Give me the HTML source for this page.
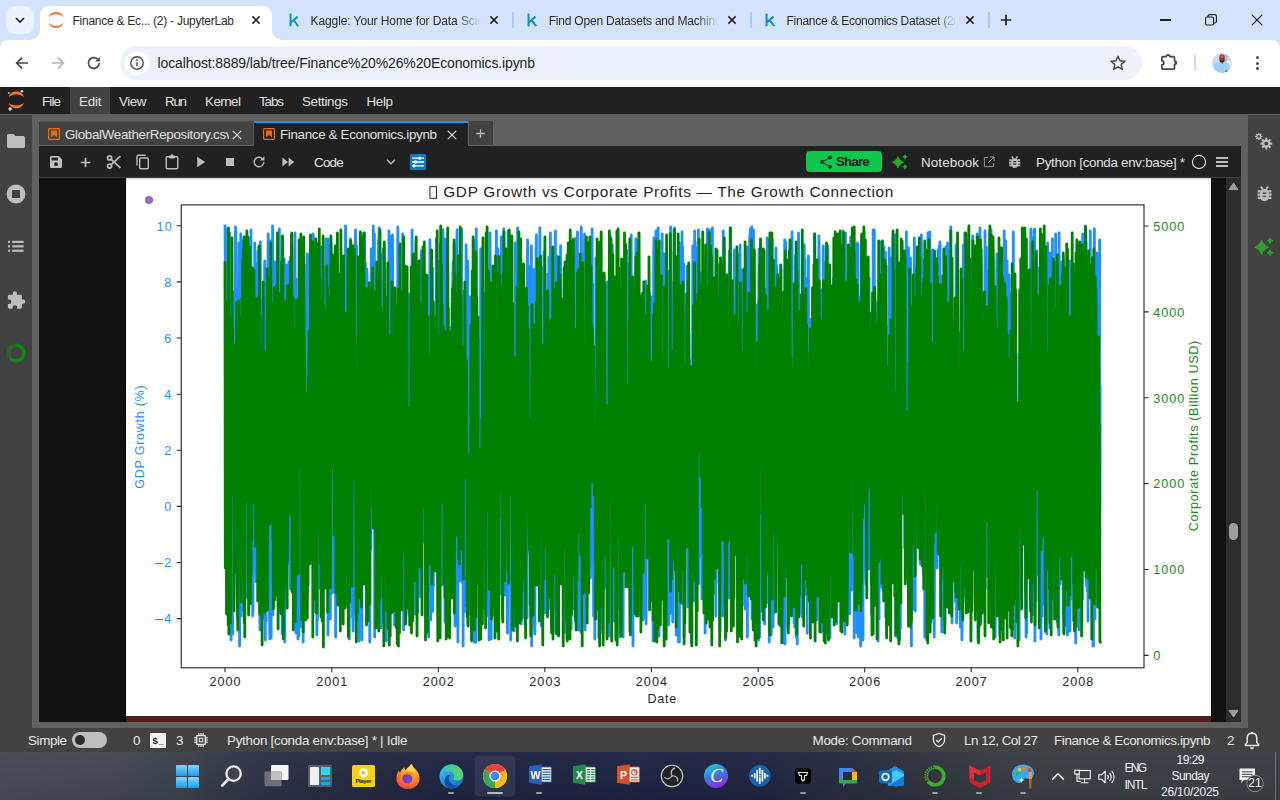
<!DOCTYPE html>
<html><head><meta charset="utf-8"><title>JupyterLab</title><style>
html,body{margin:0;padding:0;}
body{width:1280px;height:800px;overflow:hidden;position:relative;background:#616161;font-family:"Liberation Sans",sans-serif;}
.a{position:absolute;display:block;}
.t{position:absolute;white-space:pre;display:block;font-family:"Liberation Sans",sans-serif;}
</style></head><body>
<!-- chrome -->
<div class="a" style="left:0;top:0;width:1280px;height:40px;background:#d3e3fd"></div><div class="a" style="left:0;top:40px;width:1280px;height:47px;background:#fff"></div><div class="a" style="left:0;top:40px;width:8px;height:8px;background:#d3e3fd"></div><div class="a" style="left:0;top:40px;width:16px;height:16px;background:#fff;border-radius:8px 0 0 0"></div><div class="a" style="left:1272px;top:40px;width:8px;height:8px;background:#d3e3fd"></div><div class="a" style="left:1264px;top:40px;width:16px;height:16px;background:#fff;border-radius:0 8px 0 0"></div><div class="a" style="left:6px;top:6px;width:28px;height:28px;border-radius:9px;background:#ebf1fd"></div><svg class="a" style="left:14px;top:14px" width="12" height="12" viewBox="0 0 12 12"><path d="M2 4L6 8l4-4" fill="none" stroke="#1f1f1f" stroke-width="1.600"/></svg><div class="a" style="left:40px;top:6px;width:232px;height:36px;background:#fff;border-radius:9px 9px 0 0"></div><svg class="a" style="left:30px;top:30px" width="10" height="10" viewBox="0 0 10 10"><path d="M10 0v10H0A10 10 0 0 0 10 0z" fill="#fff"/></svg><svg class="a" style="left:272px;top:30px" width="10" height="10" viewBox="0 0 10 10"><path d="M0 0v10h10A10 10 0 0 1 0 0z" fill="#fff"/></svg><svg class="a" style="left:47px;top:11px" width="18" height="18" viewBox="0 0 18 18"><path d="M1.7 6.3A8 8 0 0 1 16.7 6.3A10.6 10.6 0 0 0 1.7 6.3z" fill="#f37726"/><path d="M1.7 11.7A8 8 0 0 0 16.7 11.7A10.6 10.6 0 0 1 1.7 11.7z" fill="#f37726"/></svg><span class="t" style="left:72.5px;top:12.8px;height:17px;line-height:17px;font-size:12px;color:#2b2b2b;font-weight:400;letter-spacing:-0.255px;">Finance &amp; Ec... (2) - JupyterLab</span><svg class="a" style="left:250.7px;top:15px" width="10" height="10" viewBox="0 0 10 10"><path d="M1.4 1.4l7.2 7.2M8.6 1.4l-7.2 7.2" stroke="#1f1f1f" stroke-width="1.5" fill="none"/></svg><svg class="a" style="left:288.5px;top:12px" width="12" height="16" viewBox="0 0 12 16"><path d="M1.6 1.6v12.6M2 10.2l6.6-5.6M4.6 8.2l4.6 6" fill="none" stroke="#1691c7" stroke-width="2.1" stroke-linecap="butt"/></svg><span class="t" style="left:310.5px;top:12.8px;height:17px;line-height:17px;font-size:12px;color:#2b2b2b;font-weight:400;letter-spacing:-0.087px;width:171px;overflow:hidden;-webkit-mask-image:linear-gradient(90deg,#000 86%,transparent 99%);mask-image:linear-gradient(90deg,#000 86%,transparent 99%);">Kaggle: Your Home for Data Scie</span><svg class="a" style="left:488.75px;top:15px" width="10" height="10" viewBox="0 0 10 10"><path d="M1.4 1.400l7.200 7.200M8.600 1.400l-7.200 7.200" stroke="#1f1f1f" stroke-width="1.500" fill="none"/></svg><div class="a" style="left:512px;top:12px;width:2px;height:16px;background:#a8c7fa;border-radius:1px"></div><svg class="a" style="left:526.5px;top:12px" width="12" height="16" viewBox="0 0 12 16"><path d="M1.6 1.6v12.6M2 10.2l6.6-5.6M4.6 8.2l4.6 6" fill="none" stroke="#1691c7" stroke-width="2.1" stroke-linecap="butt"/></svg><span class="t" style="left:548.7px;top:12.8px;height:17px;line-height:17px;font-size:12px;color:#2b2b2b;font-weight:400;letter-spacing:-0.203px;width:171px;overflow:hidden;-webkit-mask-image:linear-gradient(90deg,#000 86%,transparent 99%);mask-image:linear-gradient(90deg,#000 86%,transparent 99%);">Find Open Datasets and Machine</span><svg class="a" style="left:726.75px;top:15px" width="10" height="10" viewBox="0 0 10 10"><path d="M1.4 1.400l7.200 7.200M8.600 1.400l-7.200 7.200" stroke="#1f1f1f" stroke-width="1.500" fill="none"/></svg><div class="a" style="left:750px;top:12px;width:2px;height:16px;background:#a8c7fa;border-radius:1px"></div><svg class="a" style="left:764.5px;top:12px" width="12" height="16" viewBox="0 0 12 16"><path d="M1.6 1.6v12.6M2 10.2l6.6-5.6M4.6 8.2l4.6 6" fill="none" stroke="#1691c7" stroke-width="2.1" stroke-linecap="butt"/></svg><span class="t" style="left:786.5px;top:12.8px;height:17px;line-height:17px;font-size:12px;color:#2b2b2b;font-weight:400;letter-spacing:-0.264px;width:171px;overflow:hidden;-webkit-mask-image:linear-gradient(90deg,#000 86%,transparent 99%);mask-image:linear-gradient(90deg,#000 86%,transparent 99%);">Finance &amp; Economics Dataset (20</span><svg class="a" style="left:964.75px;top:15px" width="10" height="10" viewBox="0 0 10 10"><path d="M1.4 1.400l7.200 7.200M8.600 1.400l-7.200 7.200" stroke="#1f1f1f" stroke-width="1.500" fill="none"/></svg><div class="a" style="left:988px;top:12px;width:2px;height:16px;background:#a8c7fa;border-radius:1px"></div><svg class="a" style="left:999.5px;top:14px" width="12" height="12" viewBox="0 0 12 12"><path d="M6 0.8v10.4M0.8 6h10.4" stroke="#1f1f1f" stroke-width="1.7" fill="none"/></svg><div class="a" style="left:1160px;top:19.3px;width:10.500px;height:1.500px;background:#1f1f1f"></div><svg class="a" style="left:1205px;top:14px" width="12" height="12" viewBox="0 0 12 12"><rect x="0.6" y="3" width="8" height="8" rx="1.6" fill="none" stroke="#1f1f1f" stroke-width="1.1"/><path d="M3 3V2.2a1.6 1.6 0 0 1 1.6-1.6H9.8a1.6 1.6 0 0 1 1.6 1.6V7.4A1.6 1.6 0 0 1 9.8 9H8.8" fill="none" stroke="#1f1f1f" stroke-width="1.1"/></svg><svg class="a" style="left:1251px;top:14px" width="12" height="12" viewBox="0 0 12 12"><path d="M0.7 0.7l10.6 10.6M11.3 0.7L0.7 11.3" stroke="#1f1f1f" stroke-width="1.2" fill="none"/></svg><svg class="a" style="left:14px;top:55px" width="16" height="16" viewBox="0 0 16 16"><path d="M14 8H3M8 2.6L2.6 8 8 13.4" fill="none" stroke="#444746" stroke-width="1.7"/></svg><svg class="a" style="left:50px;top:55px" width="16" height="16" viewBox="0 0 16 16"><path d="M2 8h11M8 2.6L13.4 8 8 13.4" fill="none" stroke="#b4b6b9" stroke-width="1.7"/></svg><svg class="a" style="left:86px;top:55px" width="16" height="16" viewBox="0 0 16 16"><path d="M13.2 8A5.4 5.4 0 1 1 11.6 4.1" fill="none" stroke="#444746" stroke-width="1.7"/><path d="M13.8 2v4.6H9.2z" fill="#444746"/></svg><div class="a" style="left:120px;top:46px;width:1022px;height:34px;border-radius:17px;background:#edf2fa"></div><div class="a" style="left:125px;top:51px;width:24px;height:24px;border-radius:12px;background:#fff"></div><svg class="a" style="left:129px;top:55px" width="16" height="16" viewBox="0 0 16 16"><circle cx="8" cy="8" r="6.2" fill="none" stroke="#444746" stroke-width="1.4"/><path d="M8 7.2v3.8" stroke="#444746" stroke-width="1.5"/><circle cx="8" cy="5.1" r="0.9" fill="#444746"/></svg><span class="t" style="left:157.5px;top:53.0px;height:20px;line-height:20px;font-size:14px;color:#1f1f1f;font-weight:400;letter-spacing:-0.129px;">localhost:8889/lab/tree/Finance%20%26%20Economics.ipynb</span><svg class="a" style="left:1109px;top:54px" width="18" height="18" viewBox="0 0 18 18"><path d="M9 2.2l2.05 4.5 4.9.55-3.65 3.3 1 4.85L9 12.95 4.7 15.4l1-4.85L2.05 7.25l4.9-.55z" fill="none" stroke="#444746" stroke-width="1.5" stroke-linejoin="round"/></svg><svg class="a" style="left:1159px;top:52px" width="20" height="20" viewBox="0 0 20 20"><path d="M4 4.600H7.300a1.700 1.700 0 0 1 3.400 0H14.300a1.200 1.200 0 0 1 1.200 1.200V9a1.800 1.800 0 0 1 0 3.600V16a1.200 1.200 0 0 1-1.200 1.200H4a1.200 1.200 0 0 1-1.200-1.200V12.800a2 2 0 0 0 0-4V5.800A1.200 1.200 0 0 1 4 4.600z" fill="none" stroke="#444746" stroke-width="1.700" stroke-linejoin="round"/><path d="M15.500 9a1.800 1.800 0 0 1 0 3.600z" fill="#444746"/></svg><div class="a" style="left:1194px;top:55px;width:2px;height:16px;background:#c7d9f7;border-radius:1px"></div><svg class="a" style="left:1212px;top:52.900px" width="20" height="20" viewBox="0 0 20 20"><defs><clipPath id="av"><circle cx="10" cy="10" r="10"/></clipPath></defs><g clip-path="url(#av)"><rect width="20" height="20" fill="#d6d4f0"/><rect x="12.400" y="1.500" width="2.800" height="9" fill="#a9b9be"/><rect x="14.200" y="8" width="4.500" height="5.500" fill="#eef0f6"/><path d="M1.800 20V13.200c0-2 1.600-3.600 4-4L8.600 8.700l1.600 1.700 1.700-1.700 2.700.5c2 .4 3.200 1.800 3.200 3.800V20z" fill="#9ad2f6"/><ellipse cx="10" cy="4.900" rx="2.800" ry="3.700" fill="#8e3f22"/><ellipse cx="10" cy="3.600" rx="1.400" ry="1.500" fill="#c06a4a"/><path d="M7.300 6.200c.4 1 .8 1.600 2.700 1.600s2.300-.6 2.700-1.600c0 2.300-1 3.500-2.700 3.500S7.300 8.500 7.300 6.200z" fill="#1c223c"/><path d="M8.800 9.600l1.400 1.400 1.400-1.400z" fill="#a0522d"/><rect x="13.200" y="17.400" width="3" height="1.600" fill="#b5472c"/></g></svg><div class="a" style="left:1256.2px;top:56.3px;width:3px;height:3px;border-radius:2px;background:#444746"></div><div class="a" style="left:1256.2px;top:61.6px;width:3px;height:3px;border-radius:2px;background:#444746"></div><div class="a" style="left:1256.2px;top:66.9px;width:3px;height:3px;border-radius:2px;background:#444746"></div>
<!-- jlab -->
<div class="a" style="left:0;top:87px;width:1280px;height:27px;background:#212121"></div><div class="a" style="left:70px;top:87px;width:40px;height:27px;background:#424242"></div><svg class="a" style="left:6px;top:89px" width="20" height="23" viewBox="0 0 20 23"><path d="M2.600 7.900A8.250 8.250 0 0 1 18 7.900A14 14 0 0 0 2.600 7.900z" fill="#f37726"/><path d="M2.600 13.900A8.250 8.250 0 0 0 18 13.900A14 14 0 0 1 2.600 13.900z" fill="#f37726"/><circle cx="2.800" cy="3.900" r="1" fill="#b8b8b8"/><circle cx="15.900" cy="2.200" r="1.300" fill="#d6d6d6"/><circle cx="4.100" cy="20" r="1.700" fill="#dcdcdc"/></svg><span class="t" style="left:42.0px;top:91.5px;height:19px;line-height:19px;font-size:13.4px;color:#e0e0e0;font-weight:400;letter-spacing:-0.859px;">File</span><span class="t" style="left:79.0px;top:91.5px;height:19px;line-height:19px;font-size:13.4px;color:#e0e0e0;font-weight:400;letter-spacing:-0.193px;">Edit</span><span class="t" style="left:119.0px;top:91.5px;height:19px;line-height:19px;font-size:13.4px;color:#e0e0e0;font-weight:400;letter-spacing:-0.432px;">View</span><span class="t" style="left:165.0px;top:91.5px;height:19px;line-height:19px;font-size:13.4px;color:#e0e0e0;font-weight:400;letter-spacing:-1.289px;">Run</span><span class="t" style="left:205.0px;top:91.5px;height:19px;line-height:19px;font-size:13.4px;color:#e0e0e0;font-weight:400;letter-spacing:-0.544px;">Kernel</span><span class="t" style="left:259.0px;top:91.5px;height:19px;line-height:19px;font-size:13.4px;color:#e0e0e0;font-weight:400;letter-spacing:-1.099px;">Tabs</span><span class="t" style="left:302.0px;top:91.5px;height:19px;line-height:19px;font-size:13.4px;color:#e0e0e0;font-weight:400;letter-spacing:-0.342px;">Settings</span><span class="t" style="left:366.5px;top:91.5px;height:19px;line-height:19px;font-size:13.4px;color:#e0e0e0;font-weight:400;letter-spacing:-0.349px;">Help</span><div class="a" style="left:0;top:115px;width:32px;height:613px;background:#424242"></div><div class="a" style="left:1248px;top:115px;width:32px;height:613px;background:#424242"></div><svg class="a" style="left:6px;top:132px" width="20" height="18" viewBox="0 0 20 18"><path d="M2.6 2h5l2 2h7.8a1.6 1.6 0 0 1 1.6 1.6v8.8a1.6 1.6 0 0 1-1.6 1.6H2.6A1.6 1.6 0 0 1 1 14.400V3.600A1.600 1.600 0 0 1 2.600 2z" fill="#bdbdbd"/></svg><svg class="a" style="left:6px;top:183.500px" width="20" height="20" viewBox="0 0 20 20"><circle cx="10" cy="10" r="9.4" fill="#bdbdbd"/><rect x="6" y="6" width="8" height="8" rx="0.6" fill="#424242"/></svg><svg class="a" style="left:8px;top:240.300px" width="16" height="13" viewBox="0 0 18 14"><g fill="#bdbdbd"><rect x="0" y="0.600" width="2.400" height="2.400"/><rect x="4.600" y="0.600" width="13" height="2.400"/><rect x="0" y="5.600" width="2.400" height="2.400"/><rect x="4.600" y="5.600" width="13" height="2.400"/><rect x="0" y="10.600" width="2.400" height="2.400"/><rect x="4.600" y="10.600" width="13" height="2.400"/></g></svg><svg class="a" style="left:6px;top:290px" width="20" height="20" viewBox="0 0 20 20"><path d="M17.200 9.600h-1.300V6.300c0-.9-.7-1.600-1.600-1.600H11V3.400a2.100 2.100 0 1 0-4.200 0v1.300H3.500c-.9 0-1.600.7-1.600 1.600v3.100h1.200a2.300 2.300 0 1 1 0 4.600H1.900v3.100c0 .9.700 1.600 1.600 1.600h3.100v-1.200a2.300 2.300 0 1 1 4.600 0v1.200h3.100c.9 0 1.600-.7 1.600-1.600v-3.300h1.300a2.100 2.100 0 1 0 0-4.200z" fill="#bdbdbd"/></svg><svg class="a" style="left:4px;top:340.800px" width="24" height="24" viewBox="0 0 24 24"><path d="M11.45 4.12A7.9 7.9 0 1 1 5.69 16.75" fill="none" stroke="#0b8a0b" stroke-width="3.3"/><circle cx="5.84" cy="15.28" r="0.8" fill="#0b8a0b"/><circle cx="3.76" cy="15.33" r="0.8" fill="#0b8a0b"/><circle cx="5.20" cy="13.57" r="0.8" fill="#0b8a0b"/><circle cx="3.18" cy="13.08" r="0.8" fill="#0b8a0b"/><circle cx="5.03" cy="11.76" r="0.8" fill="#0b8a0b"/><circle cx="3.20" cy="10.76" r="0.8" fill="#0b8a0b"/><circle cx="5.33" cy="9.96" r="0.8" fill="#0b8a0b"/><circle cx="3.82" cy="8.53" r="0.8" fill="#0b8a0b"/><circle cx="6.08" cy="8.30" r="0.8" fill="#0b8a0b"/><circle cx="4.99" cy="6.53" r="0.8" fill="#0b8a0b"/><circle cx="7.24" cy="6.90" r="0.8" fill="#0b8a0b"/><circle cx="6.65" cy="4.90" r="0.8" fill="#0b8a0b"/><circle cx="8.72" cy="5.84" r="0.8" fill="#0b8a0b"/><circle cx="8.67" cy="3.76" r="0.8" fill="#0b8a0b"/><circle cx="10.43" cy="5.20" r="0.8" fill="#0b8a0b"/><circle cx="10.92" cy="3.18" r="0.8" fill="#0b8a0b"/></svg><svg class="a" style="left:1252px;top:130px" width="24" height="24" viewBox="1252 130 24 24"><path d="M1262.44 135.86L1262.44 137.14L1261.33 137.11L1261.02 137.86L1261.83 138.63L1260.93 139.53L1260.16 138.72L1259.41 139.03L1259.44 140.14L1258.16 140.14L1258.19 139.03L1257.44 138.72L1256.67 139.53L1255.77 138.63L1256.58 137.86L1256.27 137.11L1255.16 137.14L1255.16 135.86L1256.27 135.89L1256.58 135.14L1255.77 134.37L1256.67 133.47L1257.44 134.28L1258.19 133.97L1258.16 132.86L1259.44 132.86L1259.41 133.97L1260.16 134.28L1260.93 133.47L1261.83 134.37L1261.02 135.14L1261.33 135.89z" fill="#bdbdbd"/><circle cx="1258.8" cy="136.5" r="1.25" fill="#424242"/><path d="M1272.21 142.57L1272.21 144.63L1270.48 144.60L1269.97 145.85L1271.21 147.05L1269.75 148.51L1268.55 147.27L1267.30 147.78L1267.33 149.51L1265.27 149.51L1265.30 147.78L1264.05 147.27L1262.85 148.51L1261.39 147.05L1262.63 145.85L1262.12 144.60L1260.39 144.63L1260.39 142.57L1262.12 142.60L1262.63 141.35L1261.39 140.15L1262.85 138.69L1264.05 139.93L1265.30 139.42L1265.27 137.69L1267.33 137.69L1267.30 139.42L1268.55 139.93L1269.75 138.69L1271.21 140.15L1269.97 141.35L1270.48 142.60z" fill="#bdbdbd"/><circle cx="1266.3" cy="143.6" r="1.9" fill="#424242"/></svg><svg class="a" style="left:1255.50px;top:185.35px" width="17.00" height="18.00" viewBox="-1 -1 14 15"><g fill="#bdbdbd"><path d="M2.300 6.400C2.300 3.800 3.900 2.300 6 2.300S9.700 3.800 9.700 6.400V8.600C9.700 11 8.100 12.500 6 12.500S2.300 11 2.300 8.600z"/></g><g stroke="#bdbdbd" stroke-width="1.900" fill="none"><path d="M0.300 4.300H3M9 4.300h2.700M0.100 7.100H3M9 7.100h2.900M0.300 9.800H3M9 9.800h2.700"/><path d="M3.100 0.300l1.400 2.400M8.900 0.300L7.500 2.700" stroke-width="1.600"/></g><g stroke="#424242" stroke-width="1.100" opacity="0.9"><path d="M4.500 5.900h3M4.500 8.500h3"/></g></svg><svg class="a" style="left:1251.70px;top:235.30px" width="24" height="24" viewBox="1251.70 235.30 24 24"><path d="M1261.30 239.75Q1263.41 245.44 1269.10 247.55Q1263.41 249.66 1261.30 255.35Q1259.19 249.66 1253.50 247.55Q1259.19 245.44 1261.30 239.75zM1269.70 237.58Q1270.57 240.19 1273.18 241.06Q1270.57 241.93 1269.70 244.54Q1268.83 241.93 1266.22 241.06Q1268.83 240.19 1269.70 237.58zM1269.70 249.58Q1270.57 252.19 1273.18 253.06Q1270.57 253.93 1269.70 256.54Q1268.83 253.93 1266.22 253.06Q1268.83 252.19 1269.70 249.58z" fill="#2aa32a"/></svg><div class="a" style="left:39px;top:121px;width:215px;height:24px;background:#424242"></div><div class="a" style="left:254px;top:121px;width:214px;height:25px;background:#212121"></div><div class="a" style="left:254px;top:121px;width:214px;height:2px;background:#2196f3"></div><div class="a" style="left:469px;top:121px;width:24px;height:24px;background:#424242"></div><div class="a" style="left:253px;top:121px;width:1px;height:24px;background:#575757"></div><div class="a" style="left:39px;top:121px;width:215px;height:1px;background:#4d4d4d"></div><svg class="a" style="left:48px;top:128.1px" width="12" height="12" viewBox="0 0 12 12"><rect x="0.6" y="0.6" width="10.8" height="10.8" rx="0.8" fill="none" stroke="#ef6c00" stroke-width="1.2"/><path d="M3 2.6h6v6.6L6 6.9 3 9.2z" fill="#ef6c00"/></svg><span class="t" style="left:65.0px;top:125.0px;height:19px;line-height:19px;font-size:13.4px;color:#e0e0e0;font-weight:400;letter-spacing:-0.323px;width:164px;overflow:hidden;">GlobalWeatherRepository.csv</span><svg class="a" style="left:232px;top:129.5px" width="10" height="10" viewBox="0 0 10 10"><path d="M0.8 0.8l8.4 8.4M9.2 0.8L0.8 9.2" stroke="#e0e0e0" stroke-width="1.2" fill="none"/></svg><svg class="a" style="left:263px;top:128.1px" width="12" height="12" viewBox="0 0 12 12"><rect x="0.6" y="0.6" width="10.8" height="10.8" rx="0.8" fill="none" stroke="#ef6c00" stroke-width="1.2"/><path d="M3 2.6h6v6.6L6 6.9 3 9.2z" fill="#ef6c00"/></svg><span class="t" style="left:280.0px;top:125.0px;height:19px;line-height:19px;font-size:13.4px;color:#e0e0e0;font-weight:400;letter-spacing:-0.343px;">Finance &amp; Economics.ipynb</span><svg class="a" style="left:447px;top:129.5px" width="10" height="10" viewBox="0 0 10 10"><path d="M0.8 0.8l8.4 8.4M9.2 0.8L0.8 9.2" stroke="#e0e0e0" stroke-width="1.2" fill="none"/></svg><svg class="a" style="left:475.250px;top:128px" width="11" height="11" viewBox="0 0 11 11"><path d="M5.500 1.200v8.600M1.200 5.500h8.600" stroke="#bdbdbd" stroke-width="1.300" fill="none"/></svg><div class="a" style="left:39px;top:146px;width:1202px;height:32px;background:#212121"></div><svg class="a" style="left:49px;top:155px" width="14" height="14" viewBox="0 0 14 14"><path d="M1 2.200A1.200 1.200 0 0 1 2.200 1h7.600L13 4.200v7.600A1.200 1.200 0 0 1 11.800 13H2.200A1.200 1.200 0 0 1 1 11.800z" fill="#bdbdbd"/><rect x="2.600" y="2.600" width="6.400" height="2.800" fill="#212121"/><circle cx="7" cy="9.200" r="1.900" fill="#212121"/></svg><svg class="a" style="left:79.500px;top:156.500px" width="11" height="11" viewBox="0 0 11 11"><path d="M5.500 0.700v9.600M0.700 5.500h9.600" stroke="#bdbdbd" stroke-width="1.700" fill="none"/></svg><svg class="a" style="left:106px;top:154px" width="16" height="16" viewBox="0 0 16 16"><g fill="none" stroke="#bdbdbd" stroke-width="1.700"><circle cx="3.600" cy="3.900" r="2"/><circle cx="3.600" cy="12.100" r="2"/><path d="M5.200 5.300L14.400 13.800M5.200 10.700L14.400 2.200"/></g></svg><svg class="a" style="left:135px;top:154px" width="15" height="16" viewBox="0 0 15 16"><g fill="none" stroke="#bdbdbd" stroke-width="1.400"><rect x="4.700" y="4" width="8.600" height="10.800" rx="1.200"/><path d="M2 11.400V2.400A1.200 1.200 0 0 1 3.200 1.200h7.400"/></g></svg><svg class="a" style="left:165px;top:154px" width="14" height="16" viewBox="0 0 14 16"><g fill="none" stroke="#bdbdbd" stroke-width="1.400"><rect x="1.200" y="2.800" width="11.600" height="12" rx="1.200"/></g><rect x="4" y="1.400" width="6" height="3" rx="0.800" fill="#bdbdbd"/><circle cx="7" cy="1.500" r="1.300" fill="#bdbdbd"/></svg><svg class="a" style="left:196px;top:156px" width="10" height="12" viewBox="0 0 10 12"><path d="M1.200 0.800L9.200 6 1.200 11.200z" fill="#bdbdbd"/></svg><div class="a" style="left:226px;top:158px;width:8px;height:8px;background:#bdbdbd"></div><svg class="a" style="left:251.500px;top:155px" width="14" height="14" viewBox="0 0 14 14"><path d="M11.800 7A4.800 4.800 0 1 1 10.300 3.500" fill="none" stroke="#bdbdbd" stroke-width="1.400"/><path d="M12.400 1.200v4.400H8z" fill="#bdbdbd"/></svg><svg class="a" style="left:282px;top:157px" width="13" height="10" viewBox="0 0 13 10"><path d="M0.400 0.600L6 5 0.400 9.400zM6.600 0.600L12.200 5 6.600 9.400z" fill="#bdbdbd"/></svg><span class="t" style="left:314.0px;top:152.5px;height:19px;line-height:19px;font-size:13.4px;color:#e0e0e0;font-weight:400;letter-spacing:-0.755px;">Code</span><svg class="a" style="left:386px;top:158px" width="10" height="8" viewBox="0 0 10 8"><path d="M1 1.800l4 4 4-4" fill="none" stroke="#bdbdbd" stroke-width="1.300"/></svg><div class="a" style="left:410px;top:154px;width:16px;height:16px;background:#0d7ac4;border-radius:1.500px"></div><svg class="a" style="left:410px;top:154px" width="16" height="16" viewBox="0 0 16 16"><g stroke="#fff" stroke-width="1.300" fill="none"><path d="M2 4.200h12M2 8h12M2 11.800h12"/></g><g fill="#fff"><rect x="8.600" y="2.700" width="2.200" height="3"/><rect x="4.400" y="6.500" width="2.200" height="3"/><rect x="3" y="10.300" width="2.200" height="3"/></g></svg><div class="a" style="left:806px;top:150.800px;width:76.200px;height:21.400px;background:#0cc84c;border-radius:4px"></div><svg class="a" style="left:819px;top:155px" width="14" height="14" viewBox="0 0 14 14"><g fill="#2e3a30"><circle cx="11" cy="2.500" r="2"/><circle cx="3" cy="7.100" r="2"/><circle cx="11" cy="11.700" r="2"/></g><path d="M11 2.500L3 7.100l8 4.600" stroke="#2e3a30" stroke-width="1.100" fill="none"/></svg><span class="t" style="left:836.0px;top:151.9px;height:19px;line-height:19px;font-size:13.4px;color:#1c1c1c;font-weight:700;letter-spacing:-0.855px;">Share</span><svg class="a" style="left:888.10px;top:150.00px" width="24" height="24" viewBox="888.10 150.00 24 24"><path d="M898.10 155.75Q899.86 160.50 904.60 162.25Q899.86 164.00 898.10 168.75Q896.35 164.00 891.60 162.25Q896.35 160.50 898.10 155.75zM905.10 153.90Q905.83 156.08 908.00 156.80Q905.83 157.53 905.10 159.70Q904.38 157.53 902.20 156.80Q904.38 156.08 905.10 153.90zM905.10 163.90Q905.83 166.08 908.00 166.80Q905.83 167.53 905.10 169.70Q904.38 167.53 902.20 166.80Q904.38 166.08 905.10 163.90z" fill="#2aa82a"/></svg><span class="t" style="left:921.0px;top:152.5px;height:19px;line-height:19px;font-size:13.4px;color:#e0e0e0;font-weight:400;letter-spacing:0.096px;">Notebook</span><svg class="a" style="left:983px;top:156px" width="12" height="12" viewBox="0 0 12 12"><path d="M5 1.600H1.400v9H10.400V7" fill="none" stroke="#9a9a9a" stroke-width="1"/><path d="M6.800 0.900h4.300v4.300M11 1L5.400 6.600" fill="none" stroke="#9a9a9a" stroke-width="1"/></svg><svg class="a" style="left:1008.30px;top:155.21px" width="13.40" height="14.40" viewBox="-1 -1 14 15"><g fill="#bdbdbd"><path d="M2.300 6.400C2.300 3.800 3.900 2.300 6 2.300S9.700 3.800 9.700 6.400V8.600C9.700 11 8.100 12.500 6 12.500S2.300 11 2.300 8.600z"/></g><g stroke="#bdbdbd" stroke-width="1.900" fill="none"><path d="M0.300 4.300H3M9 4.300h2.700M0.100 7.100H3M9 7.100h2.900M0.300 9.800H3M9 9.800h2.700"/><path d="M3.100 0.300l1.400 2.400M8.900 0.300L7.500 2.700" stroke-width="1.600"/></g><g stroke="#212121" stroke-width="1.100" opacity="0.9"><path d="M4.500 5.900h3M4.500 8.500h3"/></g></svg><span class="t" style="left:1036.0px;top:152.5px;height:19px;line-height:19px;font-size:13.4px;color:#e0e0e0;font-weight:400;letter-spacing:-0.306px;">Python [conda env:base] *</span><svg class="a" style="left:1190.500px;top:154px" width="16" height="16" viewBox="0 0 16 16"><circle cx="8" cy="8" r="6.600" fill="none" stroke="#e0e0e0" stroke-width="1.100"/></svg><div class="a" style="left:1216px;top:156.9px;width:12px;height:2.500px;background:#bdbdbd"></div><div class="a" style="left:1216px;top:160.8px;width:12px;height:2.500px;background:#bdbdbd"></div><div class="a" style="left:1216px;top:164.7px;width:12px;height:2.500px;background:#bdbdbd"></div><div class="a" style="left:39px;top:178px;width:1202px;height:544px;background:#111"></div><div class="a" style="left:126px;top:178px;width:1085px;height:538px;background:#fff"></div><div class="a" style="left:126px;top:716px;width:1085px;height:6px;background:#4f1f1c"></div><div class="a" style="left:39px;top:177px;width:1202px;height:1px;background:#3e3e3e"></div><div class="a" style="left:39px;top:178px;width:1187px;height:2px;background:linear-gradient(180deg,rgba(0,0,0,.22),rgba(0,0,0,0))"></div><div class="a" style="left:125px;top:178px;width:1px;height:544px;background:#000"></div><div class="a" style="left:1226px;top:178px;width:15px;height:544px;background:#2c2c2c"></div><svg class="a" style="left:1228px;top:182px" width="11" height="9" viewBox="0 0 11 9"><path d="M5.500 1L10 7.600H1z" fill="#9f9f9f" stroke="#9f9f9f" stroke-width="1" stroke-linejoin="round"/></svg><svg class="a" style="left:1228px;top:709px" width="11" height="9" viewBox="0 0 11 9"><path d="M5.500 8L10 1.400H1z" fill="#9f9f9f" stroke="#9f9f9f" stroke-width="1" stroke-linejoin="round"/></svg><div class="a" style="left:1229px;top:523px;width:9.200px;height:17.200px;border-radius:4.600px;background:#9f9f9f"></div>
<!-- chart -->
<svg class="a" style="left:126px;top:178px" width="1085" height="538" viewBox="126 178 1085 538"><g style="filter:blur(0.45px)"><polyline points="225.0,226 225.3,265 225.6,394 225.9,229 226.2,447 226.5,302 226.8,569 227.0,431 227.3,382 227.6,313 227.9,607 228.2,519 228.5,609 228.8,306 229.1,355 229.4,629 229.7,233 230.0,241 230.3,371 230.5,388 230.8,580 231.1,640 231.4,424 231.7,622 232.0,567 232.3,545 232.6,634 232.9,451 233.2,461 233.5,292 233.8,428 234.0,377 234.3,436 234.6,368 234.9,454 235.2,530 235.5,227 235.8,228 236.1,293 236.4,349 236.7,514 237.0,550 237.3,525 237.5,617 237.8,324 238.1,478 238.4,290 238.7,484 239.0,243 239.3,290 239.6,646 239.9,558 240.2,264 240.5,449 240.8,234 241.1,479 241.3,616 241.6,382 241.9,319 242.2,533 242.5,610 242.8,507 243.1,241 243.4,328 243.7,597 244.0,543 244.3,604 244.6,621 244.8,311 245.1,572 245.4,411 245.7,458 246.0,566 246.3,339 246.6,592 246.9,376 247.2,598 247.5,470 247.8,557 248.1,533 248.3,238 248.6,309 248.9,519 249.2,274 249.5,558 249.8,481 250.1,287 250.4,377 250.7,604 251.0,230 251.3,557 251.6,538 251.8,321 252.1,508 252.4,522 252.7,616 253.0,609 253.3,401 253.6,544 253.9,394 254.2,490 254.5,456 254.8,243 255.1,443 255.4,405 255.6,282 255.9,570 256.2,582 256.5,264 256.8,302 257.1,542 257.4,567 257.7,335 258.0,251 258.3,564 258.6,247 258.9,275 259.1,393 259.4,469 259.7,603 260.0,630 260.3,242 260.6,546 260.9,350 261.2,539 261.5,300 261.8,396 262.1,523 262.4,573 262.6,344 262.9,618 263.2,551 263.5,411 263.8,288 264.1,388 264.4,529 264.7,261 265.0,561 265.3,640 265.6,533 265.9,459 266.1,621 266.4,573 266.7,491 267.0,406 267.3,591 267.6,494 267.9,272 268.2,234 268.5,370 268.8,356 269.1,401 269.4,588 269.7,632 269.9,639 270.2,264 270.5,352 270.8,241 271.1,638 271.4,379 271.7,444 272.0,339 272.3,512 272.6,226 272.9,615 273.2,417 273.4,336 273.7,268 274.0,336 274.3,351 274.6,313 274.9,262 275.2,499 275.5,358 275.8,268 276.1,280 276.4,471 276.7,314 276.9,283 277.2,406 277.5,384 277.8,486 278.1,401 278.4,390 278.7,613 279.0,378 279.3,229 279.6,276 279.9,340 280.2,483 280.4,337 280.7,402 281.0,461 281.3,294 281.6,611 281.9,331 282.2,634 282.5,394 282.8,444 283.1,550 283.4,353 283.7,437 284.0,388 284.2,259 284.5,539 284.8,642 285.1,520 285.4,361 285.7,561 286.0,575 286.3,265 286.6,369 286.9,461 287.2,271 287.5,509 287.7,366 288.0,563 288.3,465 288.6,307 288.9,262 289.2,276 289.5,485 289.8,401 290.1,513 290.4,589 290.7,438 291.0,294 291.2,289 291.5,347 291.8,247 292.1,530 292.4,576 292.7,457 293.0,531 293.3,557 293.6,472 293.9,383 294.2,439 294.5,514 294.7,294 295.0,233 295.3,456 295.6,615 295.9,633 296.2,279 296.5,629 296.8,348 297.1,407 297.4,517 297.7,314 298.0,639 298.3,590 298.5,455 298.8,636 299.1,297 299.4,547 299.7,587 300.0,627 300.3,382 300.6,459 300.9,382 301.2,371 301.5,307 301.8,243 302.0,359 302.3,563 302.6,447 302.9,571 303.2,642 303.5,448 303.8,346 304.1,571 304.4,532 304.7,501 305.0,353 305.3,428 305.5,388 305.8,328 306.1,481 306.4,313 306.7,265 307.0,610 307.3,254 307.6,343 307.9,592 308.2,456 308.5,383 308.8,264 309.0,488 309.3,407 309.6,277 309.9,311 310.2,249 310.5,452 310.8,373 311.1,560 311.4,343 311.7,302 312.0,377 312.3,345 312.6,557 312.8,268 313.1,234 313.4,235 313.7,421 314.0,314 314.3,512 314.6,264 314.9,287 315.2,500 315.5,612 315.8,461 316.1,415 316.3,323 316.6,442 316.9,635 317.2,306 317.5,620 317.8,310 318.1,574 318.4,506 318.7,315 319.0,588 319.3,584 319.6,429 319.8,342 320.1,293 320.4,357 320.7,249 321.0,439 321.3,247 321.6,610 321.9,554 322.2,425 322.5,525 322.8,340 323.1,378 323.4,427 323.6,292 323.9,411 324.2,516 324.5,486 324.8,291 325.1,268 325.4,559 325.7,289 326.0,239 326.3,426 326.6,406 326.9,562 327.1,421 327.4,435 327.7,392 328.0,635 328.3,239 328.6,430 328.9,478 329.2,310 329.5,410 329.8,440 330.1,356 330.4,619 330.6,420 330.9,473 331.2,244 331.5,258 331.8,533 332.1,448 332.4,593 332.7,464 333.0,303 333.3,268 333.6,446 333.9,513 334.1,566 334.4,387 334.7,257 335.0,592 335.3,319 335.6,637 335.9,565 336.2,551 336.5,358 336.8,511 337.1,497 337.4,386 337.7,603 337.9,339 338.2,595 338.5,432 338.8,541 339.1,563 339.4,423 339.7,463 340.0,489 340.3,473 340.6,424 340.9,579 341.2,561 341.4,381 341.7,378 342.0,424 342.3,288 342.6,389 342.9,286 343.2,549 343.5,335 343.8,306 344.1,267 344.4,514 344.7,514 344.9,258 345.2,555 345.5,226 345.8,273 346.1,590 346.4,546 346.7,341 347.0,537 347.3,606 347.6,296 347.9,469 348.2,314 348.4,594 348.7,477 349.0,358 349.3,639 349.6,562 349.9,359 350.2,263 350.5,239 350.8,598 351.1,434 351.4,328 351.7,435 352.0,358 352.2,567 352.5,617 352.8,602 353.1,631 353.4,415 353.7,430 354.0,407 354.3,585 354.6,569 354.9,561 355.2,293 355.5,230 355.7,257 356.0,607 356.3,621 356.6,246 356.9,452 357.2,325 357.5,509 357.8,450 358.1,430 358.4,466 358.7,394 359.0,641 359.2,352 359.5,291 359.8,570 360.1,456 360.4,336 360.7,476 361.0,565 361.3,577 361.6,431 361.9,640 362.2,271 362.5,309 362.7,350 363.0,284 363.3,382 363.6,476 363.9,394 364.2,434 364.5,233 364.8,308 365.1,538 365.4,263 365.7,333 366.0,319 366.3,304 366.5,476 366.8,269 367.1,276 367.4,354 367.7,324 368.0,325 368.3,476 368.6,343 368.9,617 369.2,503 369.5,449 369.8,642 370.0,497 370.3,378 370.6,384 370.9,549 371.2,249 371.5,366 371.8,505 372.1,369 372.4,407 372.7,422 373.0,483 373.3,226 373.5,376 373.8,352 374.1,326 374.4,234 374.7,637 375.0,388 375.3,336 375.6,539 375.9,478 376.2,625 376.5,564 376.8,489 377.0,605 377.3,541 377.6,266 377.9,415 378.2,433 378.5,240 378.8,408 379.1,228 379.4,378 379.7,306 380.0,615 380.3,395 380.6,327 380.8,628 381.1,255 381.4,579 381.7,448 382.0,576 382.3,438 382.6,389 382.9,622 383.2,249 383.5,470 383.8,425 384.1,395 384.3,493 384.6,526 384.9,371 385.2,411 385.5,527 385.8,345 386.1,522 386.4,641 386.7,544 387.0,629 387.3,581 387.6,329 387.8,483 388.1,269 388.4,332 388.7,626 389.0,231 389.3,249 389.6,616 389.9,266 390.2,466 390.5,446 390.8,237 391.1,544 391.3,426 391.6,252 391.9,342 392.2,450 392.5,235 392.8,303 393.1,393 393.4,598 393.7,384 394.0,455 394.3,561 394.6,625 394.9,424 395.1,594 395.4,460 395.7,366 396.0,455 396.3,536 396.6,402 396.9,470 397.2,319 397.5,423 397.8,227 398.1,246 398.4,338 398.6,546 398.9,599 399.2,271 399.5,317 399.8,384 400.1,496 400.4,532 400.7,358 401.0,409 401.3,398 401.6,380 401.9,330 402.1,567 402.4,542 402.7,234 403.0,261 403.3,277 403.6,630 403.9,621 404.2,533 404.5,468 404.8,384 405.1,604 405.4,419 405.6,616 405.9,610 406.2,362 406.5,415 406.8,381 407.1,490 407.4,445 407.7,558 408.0,502 408.3,333 408.6,294 408.9,615 409.2,596 409.4,306 409.7,384 410.0,323 410.3,557 410.6,468 410.9,538 411.2,306 411.5,491 411.8,372 412.1,230 412.4,510 412.7,416 412.9,333 413.2,259 413.5,467 413.8,491 414.1,606 414.4,278 414.7,614 415.0,612 415.3,409 415.6,443 415.9,358 416.2,521 416.4,320 416.7,615 417.0,557 417.3,368 417.6,612 417.9,519 418.2,342 418.5,355 418.8,528 419.1,587 419.4,496 419.7,341 419.9,492 420.2,597 420.5,348 420.8,407 421.1,260 421.4,251 421.7,262 422.0,462 422.3,309 422.6,518 422.9,513 423.2,479 423.5,253 423.7,270 424.0,542 424.3,494 424.6,493 424.9,494 425.2,480 425.5,484 425.8,565 426.1,409 426.4,311 426.7,419 427.0,295 427.2,410 427.5,572 427.8,327 428.1,276 428.4,528 428.7,637 429.0,430 429.3,418 429.6,408 429.9,240 430.2,373 430.5,308 430.7,620 431.0,417 431.3,315 431.6,611 431.9,612 432.2,336 432.5,268 432.8,611 433.1,380 433.4,586 433.7,333 434.0,374 434.2,543 434.5,554 434.8,325 435.1,427 435.4,325 435.7,481 436.0,505 436.3,239 436.6,364 436.9,439 437.2,421 437.5,343 437.8,349 438.0,262 438.3,474 438.6,299 438.9,366 439.2,287 439.5,307 439.8,296 440.1,273 440.4,244 440.7,377 441.0,426 441.3,348 441.5,309 441.8,469 442.1,470 442.4,585 442.7,335 443.0,230 443.3,489 443.6,576 443.9,561 444.2,468 444.5,524 444.8,239 445.0,622 445.3,517 445.6,598 445.9,374 446.2,320 446.5,571 446.8,620 447.1,454 447.4,401 447.7,264 448.0,631 448.3,601 448.5,569 448.8,555 449.1,548 449.4,345 449.7,396 450.0,552 450.3,569 450.6,528 450.9,574 451.2,328 451.5,515 451.8,416 452.1,303 452.3,445 452.6,537 452.9,273 453.2,262 453.5,503 453.8,416 454.1,244 454.4,444 454.7,554 455.0,626 455.3,248 455.6,309 455.8,485 456.1,425 456.4,430 456.7,531 457.0,230 457.3,370 457.6,547 457.9,642 458.2,448 458.5,490 458.8,311 459.1,346 459.3,392 459.6,580 459.9,581 460.2,511 460.5,538 460.8,281 461.1,429 461.4,379 461.7,229 462.0,535 462.3,422 462.6,583 462.8,322 463.1,646 463.4,301 463.7,291 464.0,301 464.3,612 464.6,533 464.9,345 465.2,606 465.5,445 465.8,449 466.1,245 466.4,400 466.6,286 466.9,519 467.2,314 467.5,471 467.8,261 468.1,608 468.4,299 468.7,559 469.0,418 469.3,425 469.6,580 469.9,297 470.1,516 470.4,516 470.7,615 471.0,518 471.3,450 471.6,346 471.9,495 472.2,358 472.5,602 472.8,481 473.1,452 473.4,240 473.6,297 473.9,371 474.2,642 474.5,488 474.8,348 475.1,547 475.4,409 475.7,454 476.0,642 476.3,229 476.6,310 476.9,560 477.1,387 477.4,524 477.7,488 478.0,420 478.3,521 478.6,505 478.9,482 479.2,366 479.5,539 479.8,563 480.1,339 480.4,508 480.7,249 480.9,410 481.2,342 481.5,507 481.8,299 482.1,608 482.4,587 482.7,607 483.0,361 483.3,349 483.6,571 483.9,477 484.2,294 484.4,397 484.7,609 485.0,551 485.3,581 485.6,594 485.9,475 486.2,616 486.5,259 486.8,467 487.1,431 487.4,374 487.7,324 487.9,301 488.2,484 488.5,507 488.8,473 489.1,640 489.4,478 489.7,352 490.0,233 490.3,314 490.6,369 490.9,391 491.2,639 491.4,507 491.7,503 492.0,373 492.3,602 492.6,488 492.9,432 493.2,315 493.5,299 493.8,389 494.1,580 494.4,324 494.7,267 495.0,416 495.2,498 495.5,436 495.8,587 496.1,346 496.4,231 496.7,430 497.0,346 497.3,295 497.6,564 497.9,249 498.2,383 498.5,563 498.7,612 499.0,544 499.3,404 499.6,353 499.9,508 500.2,256 500.5,495 500.8,452 501.1,594 501.4,237 501.7,590 502.0,266 502.2,418 502.5,411 502.8,411 503.1,535 503.4,264 503.7,229 504.0,303 504.3,394 504.6,595 504.9,300 505.2,525 505.5,269 505.8,545 506.0,405 506.3,297 506.6,569 506.9,416 507.2,615 507.5,633 507.8,571 508.1,231 508.4,251 508.7,370 509.0,517 509.3,364 509.5,336 509.8,486 510.1,398 510.4,308 510.7,640 511.0,563 511.3,450 511.6,587 511.9,484 512.2,407 512.5,574 512.8,428 513.0,536 513.3,408 513.6,507 513.9,377 514.2,631 514.5,364 514.8,586 515.1,243 515.4,394 515.7,449 516.0,474 516.3,384 516.5,357 516.8,328 517.1,330 517.4,442 517.7,228 518.0,294 518.3,287 518.6,475 518.9,464 519.2,408 519.5,266 519.8,425 520.1,426 520.3,465 520.6,266 520.9,512 521.2,624 521.5,341 521.8,268 522.1,339 522.4,395 522.7,330 523.0,518 523.3,397 523.6,617 523.8,594 524.1,459 524.4,435 524.7,480 525.0,625 525.3,354 525.6,425 525.9,546 526.2,518 526.5,480 526.8,547 527.1,618 527.3,263 527.6,240 527.9,367 528.2,282 528.5,469 528.8,308 529.1,553 529.4,332 529.7,408 530.0,266 530.3,605 530.6,313 530.8,595 531.1,420 531.4,246 531.7,646 532.0,544 532.3,521 532.6,510 532.9,620 533.2,270 533.5,303 533.8,479 534.1,497 534.4,400 534.6,627 534.9,634 535.2,269 535.5,517 535.8,437 536.1,254 536.4,235 536.7,448 537.0,560 537.3,522 537.6,258 537.9,269 538.1,564 538.4,294 538.7,498 539.0,448 539.3,574 539.6,276 539.9,228 540.2,562 540.5,381 540.8,566 541.1,276 541.4,626 541.6,602 541.9,341 542.2,515 542.5,268 542.8,281 543.1,347 543.4,590 543.7,354 544.0,252 544.3,459 544.6,613 544.9,553 545.1,517 545.4,348 545.7,564 546.0,571 546.3,548 546.6,367 546.9,314 547.2,490 547.5,368 547.8,274 548.1,398 548.4,550 548.7,520 548.9,257 549.2,366 549.5,530 549.8,377 550.1,609 550.4,233 550.7,461 551.0,424 551.3,423 551.6,628 551.9,394 552.2,527 552.4,541 552.7,309 553.0,610 553.3,527 553.6,329 553.9,543 554.2,529 554.5,416 554.8,568 555.1,269 555.4,231 555.7,633 555.9,452 556.2,331 556.5,485 556.8,256 557.1,436 557.4,571 557.7,413 558.0,375 558.3,495 558.6,370 558.9,317 559.2,429 559.4,434 559.7,291 560.0,359 560.3,428 560.6,246 560.9,573 561.2,319 561.5,577 561.8,391 562.1,548 562.4,461 562.7,321 563.0,316 563.2,314 563.5,547 563.8,441 564.1,554 564.4,403 564.7,437 565.0,632 565.3,395 565.6,346 565.9,406 566.2,279 566.5,571 566.7,583 567.0,639 567.3,438 567.6,464 567.9,461 568.2,536 568.5,311 568.8,616 569.1,265 569.4,407 569.7,418 570.0,314 570.2,547 570.5,585 570.8,516 571.1,629 571.4,514 571.7,385 572.0,426 572.3,535 572.6,399 572.9,609 573.2,301 573.5,574 573.7,539 574.0,579 574.3,356 574.6,297 574.9,316 575.2,621 575.5,474 575.8,493 576.1,556 576.4,238 576.7,629 577.0,441 577.3,326 577.5,232 577.8,586 578.1,455 578.4,333 578.7,630 579.0,545 579.3,272 579.6,587 579.9,481 580.2,521 580.5,468 580.8,615 581.0,632 581.3,227 581.6,325 581.9,338 582.2,550 582.5,540 582.8,414 583.1,545 583.4,452 583.7,254 584.0,493 584.3,505 584.5,234 584.8,390 585.1,630 585.4,477 585.7,373 586.0,622 586.3,502 586.6,354 586.9,283 587.2,398 587.5,274 587.8,452 588.0,481 588.3,292 588.6,486 588.9,318 589.2,556 589.5,500 589.8,569 590.1,415 590.4,578 590.7,561 591.0,556 591.3,450 591.6,517 591.8,459 592.1,229 592.4,361 592.7,284 593.0,561 593.3,486 593.6,616 593.9,356 594.2,494 594.5,531 594.8,639 595.1,570 595.3,536 595.6,481 595.9,258 596.2,346 596.5,534 596.8,495 597.1,582 597.4,252 597.7,495 598.0,324 598.3,342 598.6,265 598.8,638 599.1,511 599.4,485 599.7,612 600.0,275 600.3,510 600.6,322 600.9,428 601.2,624 601.5,481 601.8,546 602.1,630 602.3,583 602.6,396 602.9,633 603.2,515 603.5,468 603.8,418 604.1,589 604.4,349 604.7,537 605.0,341 605.3,366 605.6,585 605.9,560 606.1,529 606.4,347 606.7,476 607.0,484 607.3,282 607.6,552 607.9,524 608.2,502 608.5,556 608.8,630 609.1,636 609.4,381 609.6,408 609.9,306 610.2,236 610.5,521 610.8,364 611.1,260 611.4,556 611.7,357 612.0,366 612.3,245 612.6,281 612.9,548 613.1,380 613.4,609 613.7,467 614.0,482 614.3,621 614.6,485 614.9,509 615.2,437 615.5,529 615.8,580 616.1,477 616.4,447 616.6,577 616.9,367 617.2,546 617.5,608 617.8,503 618.1,469 618.4,583 618.7,401 619.0,351 619.3,414 619.6,352 619.9,637 620.2,482 620.4,493 620.7,620 621.0,477 621.3,624 621.6,438 621.9,400 622.2,449 622.5,510 622.8,540 623.1,637 623.4,501 623.7,271 623.9,409 624.2,536 624.5,366 624.8,568 625.1,449 625.4,388 625.7,245 626.0,494 626.3,404 626.6,250 626.9,322 627.2,383 627.4,385 627.7,474 628.0,472 628.3,530 628.6,298 628.9,276 629.2,486 629.5,264 629.8,631 630.1,590 630.4,433 630.7,517 630.9,495 631.2,235 631.5,584 631.8,566 632.1,551 632.4,360 632.7,548 633.0,646 633.3,418 633.6,481 633.9,546 634.2,439 634.5,373 634.7,416 635.0,384 635.3,411 635.6,297 635.9,239 636.2,506 636.5,501 636.8,274 637.1,515 637.4,345 637.7,354 638.0,358 638.2,241 638.5,300 638.8,580 639.1,385 639.4,440 639.7,409 640.0,491 640.3,526 640.6,331 640.9,422 641.2,547 641.5,542 641.7,510 642.0,572 642.3,430 642.6,594 642.9,620 643.2,618 643.5,604 643.8,350 644.1,599 644.4,457 644.7,322 645.0,444 645.2,578 645.5,282 645.8,281 646.1,624 646.4,540 646.7,433 647.0,311 647.3,482 647.6,345 647.9,541 648.2,345 648.5,509 648.8,506 649.0,327 649.3,292 649.6,298 649.9,408 650.2,470 650.5,349 650.8,384 651.1,297 651.4,309 651.7,594 652.0,488 652.3,365 652.5,549 652.8,569 653.1,641 653.4,400 653.7,251 654.0,238 654.3,590 654.6,357 654.9,470 655.2,381 655.5,480 655.8,254 656.0,231 656.3,626 656.6,346 656.9,597 657.2,629 657.5,526 657.8,339 658.1,228 658.4,596 658.7,508 659.0,636 659.3,418 659.5,443 659.8,490 660.1,517 660.4,310 660.7,294 661.0,527 661.3,482 661.6,387 661.9,325 662.2,234 662.5,483 662.8,355 663.1,417 663.3,310 663.6,585 663.9,573 664.2,602 664.5,254 664.8,541 665.1,441 665.4,596 665.7,510 666.0,639 666.3,409 666.6,586 666.8,384 667.1,531 667.4,551 667.7,444 668.0,493 668.3,537 668.6,625 668.9,620 669.2,271 669.5,516 669.8,614 670.1,570 670.3,443 670.6,227 670.9,562 671.2,282 671.5,443 671.8,472 672.1,307 672.4,480 672.7,622 673.0,415 673.3,370 673.6,384 673.8,530 674.1,252 674.4,283 674.7,228 675.0,460 675.3,296 675.6,342 675.9,573 676.2,635 676.5,576 676.8,597 677.1,615 677.4,496 677.6,330 677.9,516 678.2,430 678.5,642 678.8,558 679.1,243 679.4,642 679.7,425 680.0,306 680.3,313 680.6,337 680.9,479 681.1,309 681.4,298 681.7,324 682.0,232 682.3,604 682.6,247 682.9,477 683.2,350 683.5,541 683.8,264 684.1,637 684.4,404 684.6,551 684.9,483 685.2,491 685.5,370 685.8,305 686.1,493 686.4,378 686.7,498 687.0,529 687.3,266 687.6,511 687.9,607 688.2,506 688.4,335 688.7,558 689.0,334 689.3,417 689.6,360 689.9,572 690.2,602 690.5,587 690.8,499 691.1,465 691.4,643 691.7,435 691.9,477 692.2,511 692.5,421 692.8,246 693.1,561 693.4,276 693.7,512 694.0,329 694.3,601 694.6,231 694.9,466 695.2,242 695.4,554 695.7,475 696.0,350 696.3,572 696.6,532 696.9,362 697.2,248 697.5,511 697.8,569 698.1,496 698.4,230 698.7,584 698.9,380 699.2,488 699.5,376 699.8,557 700.1,387 700.4,273 700.7,286 701.0,382 701.3,434 701.6,408 701.9,599 702.2,294 702.5,356 702.7,456 703.0,367 703.3,470 703.6,485 703.9,550 704.2,394 704.5,406 704.8,430 705.1,633 705.4,383 705.7,459 706.0,397 706.2,396 706.5,255 706.8,583 707.1,449 707.4,229 707.7,336 708.0,515 708.3,337 708.6,230 708.9,477 709.2,282 709.5,593 709.7,230 710.0,440 710.3,548 710.6,293 710.9,373 711.2,252 711.5,298 711.8,311 712.1,431 712.4,228 712.7,619 713.0,280 713.2,347 713.5,541 713.8,307 714.1,456 714.4,421 714.7,282 715.0,564 715.3,529 715.6,376 715.9,616 716.2,413 716.5,315 716.8,440 717.0,545 717.3,310 717.6,287 717.9,322 718.2,416 718.5,265 718.8,311 719.1,583 719.4,493 719.7,604 720.0,631 720.3,501 720.5,283 720.8,296 721.1,597 721.4,570 721.7,483 722.0,289 722.3,387 722.6,267 722.9,616 723.2,231 723.5,560 723.8,382 724.0,278 724.3,340 724.6,564 724.9,365 725.2,465 725.5,640 725.8,504 726.1,514 726.4,382 726.7,529 727.0,393 727.3,354 727.5,571 727.8,593 728.1,355 728.4,450 728.7,592 729.0,598 729.3,251 729.6,390 729.9,496 730.2,564 730.5,228 730.8,356 731.1,337 731.3,495 731.6,516 731.9,475 732.2,585 732.5,381 732.8,468 733.1,301 733.4,475 733.7,454 734.0,434 734.3,250 734.6,501 734.8,351 735.1,548 735.4,403 735.7,527 736.0,279 736.3,526 736.6,287 736.9,362 737.2,455 737.5,254 737.8,484 738.1,334 738.3,394 738.6,458 738.9,620 739.2,470 739.5,528 739.8,461 740.1,245 740.4,523 740.7,354 741.0,364 741.3,544 741.6,473 741.8,591 742.1,270 742.4,541 742.7,470 743.0,503 743.3,301 743.6,289 743.9,398 744.2,417 744.5,605 744.8,269 745.1,609 745.4,494 745.6,489 745.9,342 746.2,365 746.5,502 746.8,269 747.1,247 747.4,637 747.7,380 748.0,449 748.3,494 748.6,451 748.9,514 749.1,364 749.4,392 749.7,238 750.0,236 750.3,229 750.6,480 750.9,298 751.2,373 751.5,352 751.8,227 752.1,619 752.4,452 752.6,478 752.9,371 753.2,555 753.5,230 753.8,559 754.1,491 754.4,587 754.7,481 755.0,334 755.3,612 755.6,576 755.9,374 756.1,384 756.4,334 756.7,540 757.0,305 757.3,339 757.6,320 757.9,596 758.2,449 758.5,640 758.8,285 759.1,249 759.4,270 759.7,637 759.9,499 760.2,421 760.5,422 760.8,600 761.1,315 761.4,520 761.7,433 762.0,594 762.3,408 762.6,592 762.9,610 763.2,431 763.4,523 763.7,319 764.0,543 764.3,472 764.6,624 764.9,555 765.2,457 765.5,412 765.8,453 766.1,289 766.4,603 766.7,289 766.9,582 767.2,238 767.5,426 767.8,476 768.1,389 768.4,283 768.7,241 769.0,473 769.3,642 769.6,582 769.9,302 770.2,338 770.4,347 770.7,581 771.0,423 771.3,635 771.6,600 771.9,520 772.2,240 772.5,376 772.8,290 773.1,627 773.4,472 773.7,614 774.0,537 774.2,600 774.5,260 774.8,508 775.1,441 775.4,371 775.7,273 776.0,248 776.3,408 776.6,436 776.9,266 777.2,481 777.5,521 777.7,336 778.0,538 778.3,492 778.6,466 778.9,446 779.2,496 779.5,466 779.8,457 780.1,626 780.4,295 780.7,621 781.0,425 781.2,416 781.5,478 781.8,553 782.1,605 782.4,490 782.7,514 783.0,443 783.3,550 783.6,331 783.9,442 784.2,643 784.5,476 784.7,240 785.0,644 785.3,397 785.6,242 785.9,493 786.2,395 786.5,491 786.8,520 787.1,390 787.4,399 787.7,514 788.0,437 788.3,429 788.5,329 788.8,624 789.1,608 789.4,541 789.7,533 790.0,312 790.3,468 790.6,285 790.9,477 791.2,526 791.5,361 791.8,611 792.0,232 792.3,297 792.6,509 792.9,513 793.2,302 793.5,315 793.8,376 794.1,623 794.4,325 794.7,627 795.0,384 795.3,414 795.5,256 795.8,378 796.1,637 796.4,253 796.7,330 797.0,403 797.3,644 797.6,337 797.9,471 798.2,361 798.5,233 798.8,261 799.0,615 799.3,318 799.6,461 799.9,330 800.2,488 800.5,458 800.8,463 801.1,597 801.4,512 801.7,337 802.0,617 802.3,598 802.6,296 802.8,366 803.1,416 803.4,599 803.7,597 804.0,516 804.3,245 804.6,411 804.9,259 805.2,558 805.5,472 805.8,421 806.1,293 806.3,595 806.6,279 806.9,448 807.2,633 807.5,465 807.8,488 808.1,363 808.4,256 808.7,439 809.0,356 809.3,483 809.6,319 809.8,602 810.1,334 810.4,577 810.7,400 811.0,562 811.3,501 811.6,578 811.9,499 812.2,398 812.5,428 812.8,483 813.1,405 813.3,292 813.6,496 813.9,401 814.2,444 814.5,234 814.8,509 815.1,353 815.4,548 815.7,537 816.0,339 816.3,405 816.6,539 816.9,620 817.1,300 817.4,488 817.7,345 818.0,465 818.3,387 818.6,411 818.9,236 819.2,264 819.5,455 819.8,442 820.1,549 820.4,330 820.6,604 820.9,518 821.2,290 821.5,632 821.8,353 822.1,408 822.4,415 822.7,507 823.0,583 823.3,246 823.6,325 823.9,308 824.1,606 824.4,317 824.7,555 825.0,563 825.3,422 825.6,390 825.9,596 826.2,325 826.5,402 826.8,268 827.1,258 827.4,357 827.6,493 827.9,246 828.2,344 828.5,524 828.8,286 829.1,341 829.4,535 829.7,542 830.0,638 830.3,421 830.6,540 830.9,523 831.2,540 831.4,591 831.7,443 832.0,532 832.3,527 832.6,530 832.9,432 833.2,279 833.5,579 833.8,285 834.1,287 834.4,390 834.7,418 834.9,338 835.2,422 835.5,369 835.8,260 836.1,320 836.4,537 836.7,624 837.0,252 837.3,494 837.6,315 837.9,548 838.2,456 838.4,491 838.7,340 839.0,250 839.3,434 839.6,408 839.9,500 840.2,549 840.5,247 840.8,600 841.1,251 841.4,370 841.7,616 841.9,267 842.2,604 842.5,409 842.8,596 843.1,231 843.4,517 843.7,280 844.0,621 844.3,366 844.6,618 844.9,634 845.2,406 845.5,233 845.7,358 846.0,287 846.3,316 846.6,427 846.9,614 847.2,425 847.5,569 847.8,425 848.1,498 848.4,437 848.7,564 849.0,350 849.2,471 849.5,442 849.8,614 850.1,442 850.4,412 850.7,237 851.0,410 851.3,590 851.6,520 851.9,505 852.2,351 852.5,252 852.7,236 853.0,247 853.3,257 853.6,285 853.9,253 854.2,638 854.5,441 854.8,398 855.1,358 855.4,389 855.7,389 856.0,254 856.2,610 856.5,428 856.8,243 857.1,633 857.4,600 857.7,281 858.0,244 858.3,637 858.6,633 858.9,297 859.2,357 859.5,428 859.8,403 860.0,328 860.3,307 860.6,646 860.9,618 861.2,312 861.5,236 861.8,296 862.1,475 862.4,505 862.7,501 863.0,640 863.3,323 863.5,536 863.8,400 864.1,425 864.4,506 864.7,363 865.0,455 865.3,548 865.6,276 865.9,573 866.2,584 866.5,540 866.8,445 867.0,317 867.3,507 867.6,546 867.9,371 868.2,537 868.5,427 868.8,539 869.1,278 869.4,569 869.7,549 870.0,520 870.3,508 870.6,341 870.8,363 871.1,314 871.4,419 871.7,614 872.0,325 872.3,544 872.6,555 872.9,472 873.2,230 873.5,491 873.8,497 874.1,263 874.3,230 874.6,484 874.9,590 875.2,314 875.5,317 875.8,504 876.1,314 876.4,487 876.7,526 877.0,397 877.3,335 877.6,446 877.8,302 878.1,641 878.4,437 878.7,487 879.0,619 879.3,262 879.6,586 879.9,560 880.2,277 880.5,242 880.8,255 881.1,503 881.3,255 881.6,587 881.9,346 882.2,249 882.5,566 882.8,590 883.1,361 883.4,275 883.7,341 884.0,247 884.3,456 884.6,490 884.9,596 885.1,532 885.4,252 885.7,617 886.0,569 886.3,500 886.6,626 886.9,518 887.2,570 887.5,595 887.8,425 888.1,419 888.4,408 888.6,326 888.9,425 889.2,248 889.5,612 889.8,553 890.1,614 890.4,516 890.7,327 891.0,258 891.3,435 891.6,579 891.9,508 892.1,407 892.4,523 892.7,313 893.0,237 893.3,453 893.6,393 893.9,291 894.2,451 894.5,566 894.8,249 895.1,235 895.4,636 895.6,326 895.9,478 896.2,625 896.5,578 896.8,574 897.1,337 897.4,558 897.7,638 898.0,554 898.3,310 898.6,437 898.9,372 899.2,451 899.4,570 899.7,640 900.0,519 900.3,629 900.6,537 900.9,386 901.2,491 901.5,448 901.8,384 902.1,513 902.4,497 902.7,275 902.9,402 903.2,471 903.5,419 903.8,453 904.1,507 904.4,262 904.7,548 905.0,253 905.3,288 905.6,275 905.9,578 906.2,433 906.4,232 906.7,525 907.0,575 907.3,342 907.6,548 907.9,401 908.2,580 908.5,248 908.8,527 909.1,606 909.4,357 909.7,501 909.9,411 910.2,437 910.5,258 910.8,430 911.1,487 911.4,646 911.7,438 912.0,533 912.3,405 912.6,381 912.9,452 913.2,609 913.5,437 913.7,444 914.0,377 914.3,238 914.6,529 914.9,460 915.2,611 915.5,310 915.8,548 916.1,298 916.4,311 916.7,540 917.0,267 917.2,435 917.5,467 917.8,413 918.1,249 918.4,441 918.7,444 919.0,524 919.3,293 919.6,435 919.9,503 920.2,564 920.5,556 920.7,296 921.0,309 921.3,235 921.6,261 921.9,358 922.2,311 922.5,347 922.8,306 923.1,309 923.4,573 923.7,304 924.0,519 924.2,544 924.5,260 924.8,637 925.1,431 925.4,502 925.7,313 926.0,390 926.3,263 926.6,254 926.9,376 927.2,620 927.5,366 927.8,601 928.0,233 928.3,280 928.6,516 928.9,568 929.2,354 929.5,328 929.8,232 930.1,385 930.4,594 930.7,341 931.0,622 931.3,281 931.5,323 931.8,316 932.1,279 932.4,407 932.7,250 933.0,378 933.3,440 933.6,485 933.9,498 934.2,637 934.5,579 934.8,312 935.0,550 935.3,372 935.6,320 935.9,354 936.2,430 936.5,514 936.8,532 937.1,568 937.4,374 937.7,358 938.0,250 938.3,508 938.5,256 938.8,263 939.1,524 939.4,246 939.7,386 940.0,242 940.3,321 940.6,506 940.9,529 941.2,427 941.5,441 941.8,632 942.1,284 942.3,421 942.6,448 942.9,333 943.2,542 943.5,563 943.8,402 944.1,545 944.4,509 944.7,617 945.0,625 945.3,497 945.6,425 945.8,247 946.1,377 946.4,472 946.7,475 947.0,548 947.3,447 947.6,243 947.9,595 948.2,464 948.5,358 948.8,326 949.1,413 949.3,377 949.6,252 949.9,267 950.2,541 950.5,419 950.8,227 951.1,425 951.4,567 951.7,324 952.0,623 952.3,583 952.6,415 952.8,532 953.1,344 953.4,341 953.7,512 954.0,324 954.3,374 954.6,350 954.9,455 955.2,465 955.5,602 955.8,447 956.1,245 956.4,273 956.6,623 956.9,617 957.2,533 957.5,354 957.8,463 958.1,593 958.4,468 958.7,405 959.0,333 959.3,477 959.6,373 959.9,360 960.1,388 960.4,627 960.7,348 961.0,593 961.3,624 961.6,447 961.9,640 962.2,616 962.5,482 962.8,449 963.1,602 963.4,245 963.6,288 963.9,442 964.2,399 964.5,514 964.8,233 965.1,596 965.4,519 965.7,554 966.0,282 966.3,433 966.6,474 966.9,479 967.1,273 967.4,538 967.7,314 968.0,349 968.3,458 968.6,493 968.9,463 969.2,456 969.5,514 969.8,384 970.1,474 970.4,519 970.7,321 970.9,455 971.2,447 971.5,276 971.8,455 972.1,488 972.4,269 972.7,236 973.0,316 973.3,478 973.6,364 973.9,335 974.2,522 974.4,342 974.7,247 975.0,371 975.3,365 975.6,464 975.9,372 976.2,552 976.5,322 976.8,420 977.1,234 977.4,503 977.7,347 977.9,640 978.2,472 978.5,324 978.8,537 979.1,388 979.4,554 979.7,479 980.0,228 980.3,564 980.6,263 980.9,622 981.2,401 981.4,301 981.7,294 982.0,482 982.3,398 982.6,347 982.9,326 983.2,332 983.5,403 983.8,541 984.1,350 984.4,410 984.7,418 985.0,231 985.2,589 985.5,318 985.8,510 986.1,341 986.4,247 986.7,531 987.0,408 987.3,424 987.6,438 987.9,576 988.2,383 988.5,271 988.7,368 989.0,525 989.3,307 989.6,470 989.9,586 990.2,392 990.5,453 990.8,424 991.1,230 991.4,407 991.7,245 992.0,498 992.2,327 992.5,615 992.8,520 993.1,355 993.4,356 993.7,298 994.0,487 994.3,532 994.6,496 994.9,421 995.2,637 995.5,489 995.7,370 996.0,584 996.3,516 996.6,279 996.9,254 997.2,542 997.5,572 997.8,597 998.1,611 998.4,312 998.7,336 999.0,535 999.3,441 999.5,354 999.8,635 1000.1,302 1000.4,285 1000.7,558 1001.0,351 1001.3,352 1001.6,505 1001.9,277 1002.2,555 1002.5,447 1002.8,515 1003.0,461 1003.3,305 1003.6,407 1003.9,390 1004.2,231 1004.5,553 1004.8,553 1005.1,386 1005.4,583 1005.7,241 1006.0,503 1006.3,461 1006.5,465 1006.8,298 1007.1,261 1007.4,362 1007.7,575 1008.0,497 1008.3,349 1008.6,556 1008.9,275 1009.2,280 1009.5,551 1009.8,493 1010.0,550 1010.3,344 1010.6,627 1010.9,354 1011.2,620 1011.5,293 1011.8,418 1012.1,401 1012.4,607 1012.7,628 1013.0,498 1013.3,232 1013.6,394 1013.8,284 1014.1,620 1014.4,604 1014.7,638 1015.0,353 1015.3,572 1015.6,532 1015.9,366 1016.2,354 1016.5,511 1016.8,450 1017.1,525 1017.3,410 1017.6,497 1017.9,495 1018.2,542 1018.5,524 1018.8,537 1019.1,640 1019.4,516 1019.7,398 1020.0,534 1020.3,599 1020.6,291 1020.8,449 1021.1,431 1021.4,515 1021.7,273 1022.0,329 1022.3,385 1022.6,369 1022.9,355 1023.2,436 1023.5,473 1023.8,483 1024.1,435 1024.3,449 1024.6,424 1024.9,422 1025.2,315 1025.5,271 1025.8,552 1026.1,637 1026.4,520 1026.7,633 1027.0,312 1027.3,386 1027.6,527 1027.9,566 1028.1,281 1028.4,295 1028.7,359 1029.0,356 1029.3,333 1029.6,455 1029.9,479 1030.2,414 1030.5,276 1030.8,229 1031.1,261 1031.4,295 1031.6,615 1031.9,543 1032.2,238 1032.5,418 1032.8,430 1033.1,516 1033.4,284 1033.7,429 1034.0,230 1034.3,615 1034.6,229 1034.9,641 1035.1,584 1035.4,483 1035.7,378 1036.0,600 1036.3,410 1036.6,251 1036.9,463 1037.2,326 1037.5,398 1037.8,402 1038.1,574 1038.4,451 1038.6,268 1038.9,363 1039.2,555 1039.5,459 1039.8,418 1040.1,505 1040.4,404 1040.7,381 1041.0,639 1041.3,554 1041.6,370 1041.9,556 1042.2,616 1042.4,326 1042.7,506 1043.0,244 1043.3,412 1043.6,604 1043.9,379 1044.2,536 1044.5,304 1044.8,342 1045.1,328 1045.4,623 1045.7,632 1045.9,311 1046.2,588 1046.5,562 1046.8,634 1047.1,578 1047.4,447 1047.7,243 1048.0,511 1048.3,538 1048.6,298 1048.9,569 1049.2,379 1049.4,388 1049.7,253 1050.0,628 1050.3,410 1050.6,486 1050.9,300 1051.2,541 1051.5,346 1051.8,569 1052.1,438 1052.4,239 1052.7,546 1053.0,529 1053.2,261 1053.5,363 1053.8,619 1054.1,568 1054.4,547 1054.7,525 1055.0,291 1055.3,352 1055.6,234 1055.9,365 1056.2,382 1056.5,485 1056.7,345 1057.0,439 1057.3,622 1057.6,440 1057.9,485 1058.2,423 1058.5,626 1058.8,635 1059.1,233 1059.4,490 1059.7,508 1060.0,584 1060.2,397 1060.5,262 1060.8,571 1061.1,436 1061.4,436 1061.7,324 1062.0,409 1062.3,546 1062.6,567 1062.9,342 1063.2,614 1063.5,283 1063.7,633 1064.0,567 1064.3,450 1064.6,291 1064.9,386 1065.2,333 1065.5,326 1065.8,343 1066.1,625 1066.4,299 1066.7,585 1067.0,578 1067.3,631 1067.5,635 1067.8,278 1068.1,486 1068.4,610 1068.7,627 1069.0,290 1069.3,393 1069.6,261 1069.9,631 1070.2,599 1070.5,526 1070.8,566 1071.0,599 1071.3,562 1071.6,377 1071.9,576 1072.2,576 1072.5,421 1072.8,489 1073.1,584 1073.4,408 1073.7,433 1074.0,483 1074.3,447 1074.5,630 1074.8,388 1075.1,565 1075.4,505 1075.7,643 1076.0,273 1076.3,399 1076.6,482 1076.9,419 1077.2,251 1077.5,591 1077.8,485 1078.0,349 1078.3,490 1078.6,349 1078.9,264 1079.2,630 1079.5,527 1079.8,523 1080.1,331 1080.4,317 1080.7,352 1081.0,257 1081.3,569 1081.6,481 1081.8,288 1082.1,324 1082.4,599 1082.7,234 1083.0,335 1083.3,282 1083.6,494 1083.9,392 1084.2,243 1084.5,269 1084.8,404 1085.1,272 1085.3,226 1085.6,293 1085.9,371 1086.2,242 1086.5,586 1086.8,477 1087.1,409 1087.4,591 1087.7,318 1088.0,621 1088.3,382 1088.6,529 1088.8,511 1089.1,391 1089.4,566 1089.7,458 1090.0,286 1090.3,231 1090.6,536 1090.9,493 1091.2,355 1091.5,567 1091.8,289 1092.1,563 1092.3,412 1092.6,504 1092.9,646 1093.2,646 1093.5,646 1093.8,509 1094.1,531 1094.4,229 1094.7,378 1095.0,619 1095.3,345 1095.6,549 1095.9,444 1096.1,343 1096.4,286 1096.7,253 1097.0,470 1097.3,513 1097.6,479 1097.9,515 1098.2,335 1098.5,452 1098.8,358 1099.1,583 1099.4,317 1099.6,240 1099.9,561 1100.2,387" fill="none" stroke="#1e90ff" stroke-width="2.8" stroke-linejoin="round" stroke-linecap="square"/><polyline points="225.0,263 225.3,568 225.6,372 225.9,527 226.2,320 226.5,614 226.8,303 227.0,578 227.3,441 227.6,595 227.9,312 228.2,625 228.5,228 228.8,634 229.1,348 229.4,469 229.7,431 230.0,338 230.3,496 230.5,623 230.8,317 231.1,399 231.4,370 231.7,385 232.0,238 232.3,494 232.6,327 232.9,492 233.2,406 233.5,369 233.8,514 234.0,611 234.3,447 234.6,345 234.9,398 235.2,458 235.5,376 235.8,570 236.1,572 236.4,511 236.7,303 237.0,564 237.3,599 237.5,605 237.8,630 238.1,531 238.4,406 238.7,301 239.0,508 239.3,491 239.6,525 239.9,518 240.2,320 240.5,416 240.8,538 241.1,602 241.3,317 241.6,349 241.9,298 242.2,547 242.5,417 242.8,260 243.1,397 243.4,249 243.7,576 244.0,237 244.3,623 244.6,472 244.8,637 245.1,306 245.4,358 245.7,237 246.0,308 246.3,248 246.6,420 246.9,231 247.2,332 247.5,501 247.8,237 248.1,488 248.3,565 248.6,615 248.9,451 249.2,564 249.5,254 249.8,247 250.1,556 250.4,603 250.7,424 251.0,575 251.3,418 251.6,305 251.8,540 252.1,469 252.4,268 252.7,460 253.0,503 253.3,271 253.6,304 253.9,270 254.2,357 254.5,473 254.8,355 255.1,298 255.4,378 255.6,546 255.9,523 256.2,474 256.5,322 256.8,412 257.1,415 257.4,299 257.7,601 258.0,381 258.3,507 258.6,411 258.9,295 259.1,542 259.4,246 259.7,614 260.0,410 260.3,419 260.6,548 260.9,411 261.2,449 261.5,458 261.8,344 262.1,645 262.4,488 262.6,316 262.9,587 263.2,282 263.5,561 263.8,360 264.1,574 264.4,458 264.7,469 265.0,612 265.3,352 265.6,445 265.9,357 266.1,420 266.4,413 266.7,425 267.0,521 267.3,269 267.6,610 267.9,278 268.2,283 268.5,437 268.8,320 269.1,363 269.4,392 269.7,524 269.9,512 270.2,500 270.5,520 270.8,243 271.1,503 271.4,484 271.7,470 272.0,303 272.3,446 272.6,414 272.9,539 273.2,530 273.4,609 273.7,555 274.0,536 274.3,288 274.6,435 274.9,600 275.2,452 275.5,596 275.8,409 276.1,461 276.4,286 276.7,538 276.9,289 277.2,543 277.5,233 277.8,380 278.1,629 278.4,307 278.7,531 279.0,494 279.3,585 279.6,294 279.9,609 280.2,336 280.4,480 280.7,361 281.0,523 281.3,614 281.6,262 281.9,371 282.2,575 282.5,236 282.8,263 283.1,570 283.4,639 283.7,390 284.0,588 284.2,339 284.5,449 284.8,348 285.1,407 285.4,322 285.7,301 286.0,393 286.3,398 286.6,509 286.9,590 287.2,608 287.5,286 287.7,560 288.0,467 288.3,513 288.6,386 288.9,422 289.2,285 289.5,463 289.8,494 290.1,373 290.4,333 290.7,257 291.0,516 291.2,274 291.5,234 291.8,233 292.1,592 292.4,487 292.7,321 293.0,297 293.3,630 293.6,481 293.9,342 294.2,328 294.5,422 294.7,558 295.0,476 295.3,622 295.6,514 295.9,467 296.2,300 296.5,399 296.8,472 297.1,543 297.4,514 297.7,365 298.0,459 298.3,574 298.5,301 298.8,405 299.1,240 299.4,421 299.7,385 300.0,467 300.3,391 300.6,260 300.9,234 301.2,369 301.5,466 301.8,620 302.0,293 302.3,482 302.6,486 302.9,623 303.2,632 303.5,482 303.8,237 304.1,335 304.4,349 304.7,365 305.0,532 305.3,576 305.5,393 305.8,620 306.1,399 306.4,430 306.7,418 307.0,596 307.3,618 307.6,448 307.9,585 308.2,377 308.5,516 308.8,386 309.0,331 309.3,392 309.6,423 309.9,564 310.2,501 310.5,235 310.8,534 311.1,527 311.4,439 311.7,417 312.0,314 312.3,523 312.6,242 312.8,637 313.1,314 313.4,407 313.7,268 314.0,582 314.3,357 314.6,248 314.9,366 315.2,599 315.5,259 315.8,239 316.1,600 316.3,299 316.6,613 316.9,613 317.2,312 317.5,344 317.8,244 318.1,381 318.4,431 318.7,532 319.0,406 319.3,229 319.6,375 319.8,278 320.1,564 320.4,338 320.7,339 321.0,617 321.3,302 321.6,573 321.9,555 322.2,621 322.5,368 322.8,587 323.1,236 323.4,647 323.6,306 323.9,327 324.2,407 324.5,406 324.8,311 325.1,379 325.4,588 325.7,311 326.0,498 326.3,401 326.6,431 326.9,266 327.1,472 327.4,288 327.7,612 328.0,509 328.3,365 328.6,389 328.9,297 329.2,559 329.5,308 329.8,312 330.1,587 330.4,588 330.6,401 330.9,236 331.2,389 331.5,467 331.8,433 332.1,306 332.4,427 332.7,421 333.0,397 333.3,255 333.6,310 333.9,294 334.1,535 334.4,394 334.7,300 335.0,345 335.3,246 335.6,262 335.9,593 336.2,433 336.5,496 336.8,560 337.1,436 337.4,233 337.7,323 337.9,605 338.2,542 338.5,491 338.8,274 339.1,453 339.4,580 339.7,415 340.0,543 340.3,631 340.6,397 340.9,230 341.2,320 341.4,337 341.7,583 342.0,410 342.3,379 342.6,327 342.9,459 343.2,624 343.5,256 343.8,535 344.1,336 344.4,451 344.7,319 344.9,505 345.2,608 345.5,467 345.8,445 346.1,313 346.4,477 346.7,366 347.0,488 347.3,338 347.6,573 347.9,276 348.2,249 348.4,637 348.7,286 349.0,319 349.3,355 349.6,602 349.9,338 350.2,322 350.5,383 350.8,241 351.1,248 351.4,380 351.7,258 352.0,586 352.2,521 352.5,424 352.8,427 353.1,246 353.4,379 353.7,385 354.0,385 354.3,249 354.6,478 354.9,336 355.2,394 355.5,477 355.7,504 356.0,582 356.3,642 356.6,505 356.9,520 357.2,613 357.5,442 357.8,499 358.1,257 358.4,318 358.7,367 359.0,290 359.2,531 359.5,598 359.8,390 360.1,551 360.4,232 360.7,468 361.0,274 361.3,543 361.6,607 361.9,383 362.2,355 362.5,539 362.7,257 363.0,237 363.3,358 363.6,234 363.9,233 364.2,584 364.5,339 364.8,333 365.1,339 365.4,504 365.7,418 366.0,399 366.3,289 366.5,625 366.8,489 367.1,514 367.4,314 367.7,598 368.0,621 368.3,598 368.6,598 368.9,464 369.2,283 369.5,497 369.8,604 370.0,365 370.3,507 370.6,406 370.9,332 371.2,455 371.5,338 371.8,386 372.1,288 372.4,326 372.7,268 373.0,333 373.3,528 373.5,434 373.8,322 374.1,317 374.4,339 374.7,292 375.0,300 375.3,419 375.6,377 375.9,628 376.2,446 376.5,341 376.8,262 377.0,290 377.3,462 377.6,550 377.9,274 378.2,370 378.5,566 378.8,631 379.1,277 379.4,404 379.7,601 380.0,230 380.3,400 380.6,328 380.8,307 381.1,539 381.4,427 381.7,574 382.0,389 382.3,464 382.6,314 382.9,598 383.2,560 383.5,484 383.8,646 384.1,476 384.3,242 384.6,282 384.9,571 385.2,297 385.5,552 385.8,546 386.1,378 386.4,523 386.7,562 387.0,611 387.3,572 387.6,566 387.8,263 388.1,629 388.4,419 388.7,557 389.0,344 389.3,645 389.6,490 389.9,336 390.2,636 390.5,474 390.8,510 391.1,443 391.3,382 391.6,613 391.9,282 392.2,533 392.5,322 392.8,591 393.1,607 393.4,565 393.7,611 394.0,542 394.3,588 394.6,610 394.9,288 395.1,424 395.4,438 395.7,433 396.0,306 396.3,627 396.6,628 396.9,366 397.2,644 397.5,434 397.8,384 398.1,289 398.4,646 398.6,478 398.9,515 399.2,403 399.5,633 399.8,329 400.1,244 400.4,416 400.7,366 401.0,295 401.3,292 401.6,302 401.9,442 402.1,610 402.4,312 402.7,292 403.0,352 403.3,514 403.6,237 403.9,385 404.2,515 404.5,316 404.8,552 405.1,545 405.4,266 405.6,624 405.9,281 406.2,480 406.5,406 406.8,356 407.1,267 407.4,554 407.7,608 408.0,431 408.3,552 408.6,468 408.9,600 409.2,609 409.4,408 409.7,625 410.0,535 410.3,483 410.6,607 410.9,308 411.2,267 411.5,633 411.8,307 412.1,573 412.4,340 412.7,621 412.9,333 413.2,254 413.5,538 413.8,577 414.1,503 414.4,285 414.7,318 415.0,581 415.3,267 415.6,336 415.9,244 416.2,237 416.4,580 416.7,341 417.0,636 417.3,566 417.6,421 417.9,549 418.2,555 418.5,496 418.8,453 419.1,261 419.4,402 419.7,413 419.9,344 420.2,567 420.5,309 420.8,326 421.1,304 421.4,457 421.7,419 422.0,615 422.3,454 422.6,376 422.9,247 423.2,270 423.5,504 423.7,329 424.0,287 424.3,242 424.6,360 424.9,508 425.2,279 425.5,640 425.8,408 426.1,454 426.4,275 426.7,385 427.0,562 427.2,577 427.5,632 427.8,330 428.1,317 428.4,490 428.7,553 429.0,412 429.3,564 429.6,425 429.9,502 430.2,512 430.5,356 430.7,542 431.0,507 431.3,409 431.6,250 431.9,584 432.2,518 432.5,532 432.8,514 433.1,442 433.4,302 433.7,570 434.0,344 434.2,465 434.5,406 434.8,435 435.1,393 435.4,571 435.7,388 436.0,478 436.3,317 436.6,396 436.9,475 437.2,231 437.5,571 437.8,641 438.0,595 438.3,357 438.6,608 438.9,337 439.2,610 439.5,522 439.8,385 440.1,638 440.4,465 440.7,226 441.0,340 441.3,483 441.5,265 441.8,407 442.1,306 442.4,502 442.7,486 443.0,352 443.3,327 443.6,355 443.9,583 444.2,469 444.5,513 444.8,549 445.0,598 445.3,332 445.6,587 445.9,498 446.2,639 446.5,350 446.8,384 447.1,614 447.4,247 447.7,228 448.0,331 448.3,308 448.5,351 448.8,637 449.1,532 449.4,547 449.7,638 450.0,378 450.3,398 450.6,494 450.9,332 451.2,548 451.5,529 451.8,598 452.1,548 452.3,289 452.6,441 452.9,337 453.2,282 453.5,366 453.8,495 454.1,240 454.4,613 454.7,473 455.0,274 455.3,360 455.6,498 455.8,299 456.1,328 456.4,342 456.7,535 457.0,361 457.3,371 457.6,293 457.9,431 458.2,256 458.5,344 458.8,559 459.1,403 459.3,564 459.6,387 459.9,510 460.2,227 460.5,503 460.8,314 461.1,295 461.4,490 461.7,399 462.0,549 462.3,489 462.6,462 462.8,347 463.1,433 463.4,579 463.7,374 464.0,430 464.3,426 464.6,459 464.9,282 465.2,371 465.5,368 465.8,436 466.1,478 466.4,467 466.6,361 466.9,462 467.2,617 467.5,554 467.8,624 468.1,626 468.4,496 468.7,488 469.0,455 469.3,562 469.6,549 469.9,459 470.1,525 470.4,537 470.7,440 471.0,325 471.3,621 471.6,641 471.9,458 472.2,271 472.5,381 472.8,493 473.1,237 473.4,361 473.6,299 473.9,292 474.2,630 474.5,565 474.8,314 475.1,482 475.4,268 475.7,617 476.0,252 476.3,386 476.6,474 476.9,298 477.1,421 477.4,453 477.7,569 478.0,317 478.3,585 478.6,520 478.9,610 479.2,640 479.5,522 479.8,628 480.1,449 480.4,501 480.7,639 480.9,452 481.2,526 481.5,549 481.8,419 482.1,507 482.4,624 482.7,255 483.0,238 483.3,547 483.6,369 483.9,401 484.2,542 484.4,420 484.7,535 485.0,531 485.3,456 485.6,628 485.9,550 486.2,233 486.5,323 486.8,507 487.1,227 487.4,508 487.7,289 487.9,511 488.2,271 488.5,457 488.8,280 489.1,589 489.4,481 489.7,502 490.0,318 490.3,283 490.6,590 490.9,474 491.2,574 491.4,619 491.7,592 492.0,616 492.3,520 492.6,465 492.9,266 493.2,372 493.5,327 493.8,508 494.1,511 494.4,473 494.7,549 495.0,638 495.2,531 495.5,256 495.8,625 496.1,435 496.4,549 496.7,326 497.0,631 497.3,432 497.6,342 497.9,452 498.2,586 498.5,273 498.7,639 499.0,257 499.3,303 499.6,275 499.9,283 500.2,491 500.5,383 500.8,449 501.1,401 501.4,487 501.7,287 502.0,517 502.2,411 502.5,618 502.8,622 503.1,274 503.4,497 503.7,489 504.0,232 504.3,343 504.6,581 504.9,418 505.2,443 505.5,392 505.8,532 506.0,531 506.3,249 506.6,396 506.9,415 507.2,356 507.5,330 507.8,571 508.1,317 508.4,444 508.7,583 509.0,514 509.3,230 509.5,291 509.8,267 510.1,436 510.4,379 510.7,480 511.0,338 511.3,421 511.6,496 511.9,236 512.2,436 512.5,630 512.8,304 513.0,606 513.3,529 513.6,456 513.9,558 514.2,458 514.5,462 514.8,424 515.1,372 515.4,358 515.7,626 516.0,547 516.3,598 516.5,507 516.8,454 517.1,288 517.4,641 517.7,306 518.0,581 518.3,335 518.6,290 518.9,232 519.2,405 519.5,623 519.8,526 520.1,463 520.3,363 520.6,239 520.9,278 521.2,620 521.5,593 521.8,373 522.1,560 522.4,401 522.7,432 523.0,417 523.3,500 523.6,264 523.8,523 524.1,495 524.4,579 524.7,525 525.0,591 525.3,378 525.6,638 525.9,545 526.2,307 526.5,288 526.8,504 527.1,338 527.3,306 527.6,373 527.9,385 528.2,330 528.5,512 528.8,507 529.1,539 529.4,550 529.7,431 530.0,420 530.3,566 530.6,611 530.8,636 531.1,557 531.4,581 531.7,385 532.0,305 532.3,422 532.6,376 532.9,470 533.2,615 533.5,332 533.8,325 534.1,585 534.4,516 534.6,360 534.9,350 535.2,578 535.5,484 535.8,485 536.1,417 536.4,302 536.7,585 537.0,489 537.3,259 537.6,572 537.9,572 538.1,316 538.4,384 538.7,446 539.0,454 539.3,621 539.6,377 539.9,535 540.2,461 540.5,256 540.8,438 541.1,481 541.4,498 541.6,527 541.9,387 542.2,345 542.5,598 542.8,645 543.1,481 543.4,577 543.7,395 544.0,579 544.3,435 544.6,447 544.9,237 545.1,512 545.4,536 545.7,505 546.0,369 546.3,546 546.6,545 546.9,347 547.2,424 547.5,617 547.8,291 548.1,593 548.4,522 548.7,417 548.9,455 549.2,325 549.5,584 549.8,371 550.1,571 550.4,598 550.7,353 551.0,320 551.3,601 551.6,633 551.9,562 552.2,405 552.4,633 552.7,247 553.0,639 553.3,334 553.6,308 553.9,485 554.2,304 554.5,573 554.8,321 555.1,405 555.4,289 555.7,313 555.9,316 556.2,283 556.5,540 556.8,634 557.1,575 557.4,332 557.7,429 558.0,439 558.3,448 558.6,636 558.9,257 559.2,407 559.4,401 559.7,439 560.0,275 560.3,448 560.6,420 560.9,311 561.2,584 561.5,299 561.8,384 562.1,507 562.4,584 562.7,430 563.0,523 563.2,646 563.5,300 563.8,332 564.1,268 564.4,326 564.7,476 565.0,262 565.3,546 565.6,538 565.9,450 566.2,362 566.5,605 566.7,622 567.0,255 567.3,641 567.6,334 567.9,449 568.2,243 568.5,285 568.8,451 569.1,417 569.4,354 569.7,537 570.0,639 570.2,230 570.5,418 570.8,310 571.1,420 571.4,615 571.7,603 572.0,548 572.3,241 572.6,303 572.9,524 573.2,459 573.5,239 573.7,434 574.0,513 574.3,424 574.6,576 574.9,407 575.2,617 575.5,428 575.8,600 576.1,630 576.4,329 576.7,434 577.0,580 577.3,479 577.5,273 577.8,495 578.1,532 578.4,445 578.7,270 579.0,388 579.3,447 579.6,383 579.9,498 580.2,254 580.5,532 580.8,555 581.0,442 581.3,310 581.6,322 581.9,369 582.2,646 582.5,310 582.8,263 583.1,594 583.4,564 583.7,555 584.0,592 584.3,585 584.5,436 584.8,354 585.1,451 585.4,419 585.7,358 586.0,300 586.3,237 586.6,350 586.9,438 587.2,623 587.5,523 587.8,566 588.0,243 588.3,341 588.6,593 588.9,505 589.2,469 589.5,382 589.8,237 590.1,507 590.4,353 590.7,473 591.0,266 591.3,436 591.6,324 591.8,401 592.1,344 592.4,329 592.7,482 593.0,459 593.3,386 593.6,346 593.9,397 594.2,495 594.5,441 594.8,432 595.1,486 595.3,512 595.6,619 595.9,619 596.2,581 596.5,610 596.8,490 597.1,239 597.4,478 597.7,263 598.0,357 598.3,255 598.6,373 598.8,244 599.1,308 599.4,613 599.7,646 600.0,242 600.3,503 600.6,372 600.9,246 601.2,232 601.5,426 601.8,508 602.1,398 602.3,353 602.6,607 602.9,309 603.2,645 603.5,484 603.8,292 604.1,273 604.4,284 604.7,283 605.0,455 605.3,468 605.6,445 605.9,429 606.1,555 606.4,490 606.7,445 607.0,639 607.3,406 607.6,620 607.9,411 608.2,622 608.5,569 608.8,454 609.1,327 609.4,231 609.6,325 609.9,302 610.2,464 610.5,429 610.8,417 611.1,239 611.4,290 611.7,641 612.0,356 612.3,344 612.6,272 612.9,255 613.1,480 613.4,472 613.7,548 614.0,566 614.3,277 614.6,335 614.9,297 615.2,511 615.5,325 615.8,640 616.1,437 616.4,515 616.6,520 616.9,231 617.2,645 617.5,245 617.8,366 618.1,229 618.4,476 618.7,268 619.0,415 619.3,404 619.6,383 619.9,537 620.2,392 620.4,573 620.7,633 621.0,343 621.3,636 621.6,259 621.9,551 622.2,263 622.5,517 622.8,346 623.1,504 623.4,354 623.7,571 623.9,551 624.2,534 624.5,233 624.8,267 625.1,484 625.4,244 625.7,253 626.0,587 626.3,386 626.6,557 626.9,502 627.2,519 627.4,553 627.7,400 628.0,555 628.3,507 628.6,587 628.9,534 629.2,321 629.5,526 629.8,239 630.1,600 630.4,635 630.7,542 630.9,430 631.2,516 631.5,478 631.8,332 632.1,368 632.4,545 632.7,277 633.0,495 633.3,407 633.6,495 633.9,328 634.2,403 634.5,437 634.7,574 635.0,614 635.3,537 635.6,289 635.9,257 636.2,476 636.5,616 636.8,563 637.1,253 637.4,593 637.7,472 638.0,616 638.2,438 638.5,502 638.8,233 639.1,233 639.4,435 639.7,295 640.0,363 640.3,452 640.6,322 640.9,632 641.2,576 641.5,300 641.7,429 642.0,359 642.3,392 642.6,293 642.9,541 643.2,572 643.5,525 643.8,282 644.1,435 644.4,325 644.7,322 645.0,503 645.2,337 645.5,316 645.8,432 646.1,425 646.4,449 646.7,455 647.0,558 647.3,405 647.6,286 647.9,540 648.2,471 648.5,490 648.8,522 649.0,257 649.3,340 649.6,610 649.9,429 650.2,500 650.5,493 650.8,600 651.1,393 651.4,495 651.7,362 652.0,596 652.3,429 652.5,460 652.8,378 653.1,620 653.4,315 653.7,426 654.0,541 654.3,576 654.6,304 654.9,641 655.2,400 655.5,518 655.8,502 656.0,240 656.3,589 656.6,569 656.9,642 657.2,493 657.5,615 657.8,628 658.1,359 658.4,249 658.7,576 659.0,394 659.3,241 659.5,572 659.8,582 660.1,434 660.4,625 660.7,403 661.0,296 661.3,276 661.6,599 661.9,413 662.2,435 662.5,457 662.8,569 663.1,392 663.3,583 663.6,360 663.9,609 664.2,646 664.5,287 664.8,505 665.1,475 665.4,431 665.7,445 666.0,639 666.3,302 666.6,235 666.8,519 667.1,526 667.4,530 667.7,369 668.0,425 668.3,412 668.6,390 668.9,538 669.2,428 669.5,423 669.8,383 670.1,378 670.3,234 670.6,591 670.9,432 671.2,397 671.5,579 671.8,491 672.1,543 672.4,418 672.7,351 673.0,535 673.3,452 673.6,560 673.8,474 674.1,230 674.4,273 674.7,494 675.0,503 675.3,570 675.6,276 675.9,257 676.2,627 676.5,458 676.8,478 677.1,546 677.4,367 677.6,299 677.9,492 678.2,234 678.5,391 678.8,545 679.1,359 679.4,591 679.7,473 680.0,403 680.3,569 680.6,602 680.9,487 681.1,286 681.4,561 681.7,448 682.0,390 682.3,569 682.6,489 682.9,282 683.2,314 683.5,412 683.8,383 684.1,644 684.4,547 684.6,497 684.9,623 685.2,457 685.5,389 685.8,367 686.1,391 686.4,432 686.7,294 687.0,545 687.3,521 687.6,547 687.9,522 688.2,281 688.4,455 688.7,263 689.0,442 689.3,484 689.6,387 689.9,632 690.2,445 690.5,499 690.8,443 691.1,475 691.4,367 691.7,373 691.9,646 692.2,427 692.5,472 692.8,490 693.1,569 693.4,306 693.7,571 694.0,538 694.3,509 694.6,263 694.9,445 695.2,581 695.4,557 695.7,517 696.0,301 696.3,645 696.6,545 696.9,343 697.2,611 697.5,400 697.8,294 698.1,453 698.4,354 698.7,411 698.9,276 699.2,239 699.5,398 699.8,342 700.1,350 700.4,299 700.7,476 701.0,374 701.3,472 701.6,286 701.9,302 702.2,507 702.5,418 702.7,232 703.0,338 703.3,553 703.6,445 703.9,613 704.2,534 704.5,308 704.8,572 705.1,388 705.4,327 705.7,245 706.0,467 706.2,623 706.5,469 706.8,373 707.1,327 707.4,287 707.7,619 708.0,464 708.3,340 708.6,532 708.9,305 709.2,233 709.5,508 709.7,391 710.0,627 710.3,365 710.6,246 710.9,320 711.2,510 711.5,257 711.8,645 712.1,410 712.4,621 712.7,474 713.0,533 713.2,594 713.5,278 713.8,305 714.1,422 714.4,578 714.7,432 715.0,552 715.3,416 715.6,364 715.9,249 716.2,543 716.5,535 716.8,568 717.0,250 717.3,309 717.6,499 717.9,465 718.2,301 718.5,401 718.8,400 719.1,475 719.4,397 719.7,646 720.0,573 720.3,294 720.5,258 720.8,410 721.1,369 721.4,464 721.7,495 722.0,401 722.3,318 722.6,265 722.9,540 723.2,455 723.5,461 723.8,332 724.0,280 724.3,238 724.6,365 724.9,393 725.2,599 725.5,621 725.8,638 726.1,386 726.4,404 726.7,631 727.0,275 727.3,356 727.5,357 727.8,542 728.1,519 728.4,414 728.7,506 729.0,419 729.3,372 729.6,394 729.9,510 730.2,228 730.5,539 730.8,412 731.1,486 731.3,631 731.6,498 731.9,371 732.2,281 732.5,480 732.8,580 733.1,380 733.4,626 733.7,430 734.0,598 734.3,353 734.6,327 734.8,319 735.1,503 735.4,315 735.7,430 736.0,549 736.3,349 736.6,555 736.9,247 737.2,303 737.5,642 737.8,356 738.1,456 738.3,625 738.6,448 738.9,396 739.2,636 739.5,580 739.8,324 740.1,537 740.4,283 740.7,481 741.0,369 741.3,490 741.6,639 741.8,364 742.1,524 742.4,412 742.7,352 743.0,415 743.3,567 743.6,578 743.9,298 744.2,269 744.5,505 744.8,387 745.1,242 745.4,583 745.6,434 745.9,316 746.2,372 746.5,406 746.8,314 747.1,490 747.4,553 747.7,515 748.0,514 748.3,461 748.6,596 748.9,293 749.1,375 749.4,351 749.7,370 750.0,323 750.3,459 750.6,537 750.9,555 751.2,599 751.5,240 751.8,361 752.1,380 752.4,392 752.6,465 752.9,427 753.2,630 753.5,357 753.8,467 754.1,610 754.4,250 754.7,430 755.0,640 755.3,544 755.6,512 755.9,438 756.1,646 756.4,476 756.7,369 757.0,368 757.3,504 757.6,343 757.9,585 758.2,629 758.5,638 758.8,575 759.1,301 759.4,514 759.7,265 759.9,339 760.2,310 760.5,239 760.8,373 761.1,363 761.4,305 761.7,367 762.0,467 762.3,359 762.6,612 762.9,316 763.2,620 763.4,249 763.7,364 764.0,251 764.3,378 764.6,477 764.9,435 765.2,457 765.5,607 765.8,296 766.1,575 766.4,555 766.7,509 766.9,355 767.2,474 767.5,517 767.8,401 768.1,515 768.4,570 768.7,311 769.0,456 769.3,357 769.6,635 769.9,233 770.2,570 770.4,416 770.7,574 771.0,510 771.3,319 771.6,429 771.9,233 772.2,599 772.5,279 772.8,265 773.1,510 773.4,261 773.7,531 774.0,349 774.2,508 774.5,426 774.8,382 775.1,288 775.4,511 775.7,612 776.0,529 776.3,335 776.6,504 776.9,455 777.2,372 777.5,475 777.7,275 778.0,477 778.3,443 778.6,279 778.9,624 779.2,485 779.5,364 779.8,369 780.1,461 780.4,463 780.7,265 781.0,269 781.2,537 781.5,463 781.8,643 782.1,602 782.4,500 782.7,492 783.0,352 783.3,588 783.6,457 783.9,292 784.2,596 784.5,556 784.7,498 785.0,403 785.3,251 785.6,560 785.9,455 786.2,393 786.5,301 786.8,260 787.1,268 787.4,577 787.7,506 788.0,627 788.3,633 788.5,479 788.8,463 789.1,389 789.4,250 789.7,597 790.0,240 790.3,349 790.6,590 790.9,358 791.2,596 791.5,616 791.8,370 792.0,588 792.3,367 792.6,467 792.9,367 793.2,514 793.5,389 793.8,606 794.1,284 794.4,312 794.7,494 795.0,374 795.3,607 795.5,383 795.8,546 796.1,242 796.4,597 796.7,634 797.0,272 797.3,359 797.6,386 797.9,610 798.2,461 798.5,340 798.8,617 799.0,312 799.3,398 799.6,594 799.9,427 800.2,471 800.5,311 800.8,409 801.1,295 801.4,327 801.7,437 802.0,563 802.3,230 802.6,513 802.8,382 803.1,295 803.4,568 803.7,626 804.0,315 804.3,339 804.6,579 804.9,519 805.2,386 805.5,409 805.8,289 806.1,444 806.3,567 806.6,325 806.9,472 807.2,534 807.5,587 807.8,541 808.1,594 808.4,582 808.7,429 809.0,600 809.3,572 809.6,353 809.8,571 810.1,329 810.4,638 810.7,517 811.0,584 811.3,420 811.6,442 811.9,332 812.2,464 812.5,288 812.8,622 813.1,396 813.3,622 813.6,504 813.9,265 814.2,547 814.5,621 814.8,234 815.1,641 815.4,393 815.7,584 816.0,391 816.3,300 816.6,596 816.9,260 817.1,362 817.4,596 817.7,567 818.0,482 818.3,316 818.6,283 818.9,569 819.2,281 819.5,388 819.8,632 820.1,422 820.4,528 820.6,407 820.9,321 821.2,598 821.5,614 821.8,622 822.1,421 822.4,337 822.7,533 823.0,343 823.3,281 823.6,442 823.9,606 824.1,641 824.4,602 824.7,332 825.0,303 825.3,643 825.6,379 825.9,262 826.2,522 826.5,243 826.8,317 827.1,567 827.4,568 827.6,293 827.9,524 828.2,633 828.5,640 828.8,361 829.1,360 829.4,573 829.7,265 830.0,499 830.3,542 830.6,545 830.9,372 831.2,326 831.4,286 831.7,617 832.0,381 832.3,510 832.6,611 832.9,372 833.2,575 833.5,611 833.8,238 834.1,625 834.4,443 834.7,482 834.9,573 835.2,232 835.5,619 835.8,621 836.1,512 836.4,399 836.7,411 837.0,349 837.3,405 837.6,450 837.9,234 838.2,601 838.4,450 838.7,511 839.0,235 839.3,439 839.6,436 839.9,316 840.2,231 840.5,365 840.8,631 841.1,581 841.4,593 841.7,625 841.9,632 842.2,246 842.5,475 842.8,332 843.1,537 843.4,558 843.7,233 844.0,611 844.3,282 844.6,621 844.9,446 845.2,460 845.5,409 845.7,391 846.0,594 846.3,282 846.6,561 846.9,540 847.2,625 847.5,553 847.8,401 848.1,448 848.4,245 848.7,301 849.0,497 849.2,516 849.5,435 849.8,531 850.1,496 850.4,372 850.7,552 851.0,248 851.3,275 851.6,364 851.9,344 852.2,228 852.5,445 852.7,471 853.0,374 853.3,320 853.6,462 853.9,554 854.2,227 854.5,345 854.8,362 855.1,610 855.4,475 855.7,386 856.0,280 856.2,518 856.5,610 856.8,343 857.1,285 857.4,416 857.7,347 858.0,508 858.3,513 858.6,597 858.9,603 859.2,313 859.5,303 859.8,406 860.0,417 860.3,430 860.6,310 860.9,611 861.2,556 861.5,583 861.8,234 862.1,439 862.4,349 862.7,518 863.0,306 863.3,319 863.5,480 863.8,227 864.1,232 864.4,328 864.7,503 865.0,249 865.3,240 865.6,408 865.9,495 866.2,383 866.5,513 866.8,598 867.0,519 867.3,485 867.6,444 867.9,420 868.2,257 868.5,375 868.8,457 869.1,443 869.4,313 869.7,380 870.0,471 870.3,488 870.6,335 870.8,372 871.1,501 871.4,585 871.7,576 872.0,635 872.3,345 872.6,293 872.9,407 873.2,634 873.5,498 873.8,552 874.1,606 874.3,389 874.6,287 874.9,293 875.2,305 875.5,541 875.8,338 876.1,524 876.4,501 876.7,323 877.0,639 877.3,387 877.6,513 877.8,448 878.1,551 878.4,562 878.7,241 879.0,451 879.3,558 879.6,374 879.9,276 880.2,439 880.5,401 880.8,301 881.1,275 881.3,450 881.6,409 881.9,583 882.2,581 882.5,241 882.8,545 883.1,419 883.4,555 883.7,601 884.0,535 884.3,468 884.6,544 884.9,260 885.1,522 885.4,263 885.7,370 886.0,266 886.3,452 886.6,638 886.9,583 887.2,614 887.5,593 887.8,625 888.1,544 888.4,440 888.6,367 888.9,565 889.2,474 889.5,336 889.8,602 890.1,353 890.4,611 890.7,641 891.0,320 891.3,421 891.6,393 891.9,524 892.1,583 892.4,408 892.7,517 893.0,231 893.3,312 893.6,270 893.9,572 894.2,490 894.5,487 894.8,596 895.1,445 895.4,393 895.6,522 895.9,572 896.2,635 896.5,549 896.8,441 897.1,230 897.4,347 897.7,542 898.0,535 898.3,561 898.6,278 898.9,644 899.2,263 899.4,322 899.7,521 900.0,412 900.3,600 900.6,351 900.9,603 901.2,239 901.5,473 901.8,380 902.1,241 902.4,268 902.7,301 902.9,387 903.2,489 903.5,424 903.8,329 904.1,514 904.4,251 904.7,388 905.0,257 905.3,584 905.6,438 905.9,432 906.2,522 906.4,412 906.7,437 907.0,494 907.3,537 907.6,429 907.9,482 908.2,542 908.5,626 908.8,456 909.1,363 909.4,591 909.7,269 909.9,589 910.2,602 910.5,627 910.8,306 911.1,568 911.4,621 911.7,355 912.0,546 912.3,498 912.6,406 912.9,527 913.2,275 913.5,469 913.7,381 914.0,368 914.3,416 914.6,332 914.9,521 915.2,576 915.5,456 915.8,297 916.1,446 916.4,447 916.7,270 917.0,292 917.2,247 917.5,346 917.8,362 918.1,472 918.4,548 918.7,285 919.0,371 919.3,238 919.6,546 919.9,258 920.2,559 920.5,334 920.7,463 921.0,296 921.3,389 921.6,523 921.9,308 922.2,566 922.5,338 922.8,381 923.1,334 923.4,283 923.7,589 924.0,279 924.2,329 924.5,310 924.8,241 925.1,398 925.4,319 925.7,439 926.0,250 926.3,438 926.6,422 926.9,640 927.2,474 927.5,595 927.8,643 928.0,427 928.3,616 928.6,604 928.9,240 929.2,557 929.5,505 929.8,340 930.1,632 930.4,284 930.7,447 931.0,617 931.3,606 931.5,513 931.8,369 932.1,430 932.4,517 932.7,618 933.0,343 933.3,542 933.6,456 933.9,470 934.2,407 934.5,251 934.8,311 935.0,273 935.3,532 935.6,377 935.9,363 936.2,328 936.5,471 936.8,259 937.1,444 937.4,277 937.7,448 938.0,345 938.3,554 938.5,550 938.8,420 939.1,382 939.4,434 939.7,291 940.0,285 940.3,466 940.6,616 940.9,491 941.2,580 941.5,300 941.8,533 942.1,363 942.3,341 942.6,453 942.9,276 943.2,490 943.5,451 943.8,249 944.1,566 944.4,356 944.7,633 945.0,545 945.3,441 945.6,257 945.8,280 946.1,315 946.4,589 946.7,403 947.0,528 947.3,607 947.6,336 947.9,303 948.2,462 948.5,402 948.8,501 949.1,504 949.3,613 949.6,334 949.9,343 950.2,523 950.5,523 950.8,231 951.1,555 951.4,432 951.7,616 952.0,258 952.3,328 952.6,423 952.8,489 953.1,581 953.4,578 953.7,372 954.0,452 954.3,496 954.6,420 954.9,557 955.2,298 955.5,389 955.8,592 956.1,496 956.4,597 956.6,438 956.9,458 957.2,559 957.5,233 957.8,351 958.1,489 958.4,387 958.7,377 959.0,609 959.3,430 959.6,397 959.9,521 960.1,487 960.4,373 960.7,376 961.0,269 961.3,565 961.6,494 961.9,279 962.2,610 962.5,612 962.8,620 963.1,531 963.4,580 963.6,491 963.9,441 964.2,543 964.5,403 964.8,352 965.1,513 965.4,586 965.7,233 966.0,465 966.3,613 966.6,600 966.9,341 967.1,464 967.4,252 967.7,333 968.0,612 968.3,329 968.6,241 968.9,226 969.2,289 969.5,383 969.8,259 970.1,312 970.4,470 970.7,526 970.9,641 971.2,610 971.5,479 971.8,611 972.1,591 972.4,456 972.7,539 973.0,241 973.3,569 973.6,413 973.9,428 974.2,476 974.4,314 974.7,246 975.0,296 975.3,620 975.6,498 975.9,471 976.2,263 976.5,356 976.8,490 977.1,345 977.4,237 977.7,611 977.9,237 978.2,604 978.5,643 978.8,626 979.1,284 979.4,516 979.7,281 980.0,388 980.3,625 980.6,240 980.9,579 981.2,249 981.4,272 981.7,417 982.0,613 982.3,611 982.6,549 982.9,563 983.2,332 983.5,559 983.8,463 984.1,608 984.4,292 984.7,504 985.0,636 985.2,339 985.5,357 985.8,437 986.1,328 986.4,509 986.7,307 987.0,307 987.3,448 987.6,328 987.9,522 988.2,417 988.5,385 988.7,623 989.0,395 989.3,306 989.6,234 989.9,226 990.2,473 990.5,397 990.8,604 991.1,235 991.4,627 991.7,377 992.0,457 992.2,306 992.5,256 992.8,255 993.1,237 993.4,264 993.7,639 994.0,602 994.3,444 994.6,366 994.9,287 995.2,301 995.5,331 995.7,447 996.0,562 996.3,554 996.6,330 996.9,511 997.2,616 997.5,363 997.8,403 998.1,360 998.4,446 998.7,546 999.0,238 999.3,435 999.5,407 999.8,370 1000.1,642 1000.4,572 1000.7,503 1001.0,248 1001.3,629 1001.6,248 1001.9,393 1002.2,468 1002.5,336 1002.8,278 1003.0,318 1003.3,640 1003.6,284 1003.9,496 1004.2,293 1004.5,438 1004.8,284 1005.1,618 1005.4,436 1005.7,297 1006.0,514 1006.3,298 1006.5,585 1006.8,413 1007.1,638 1007.4,335 1007.7,534 1008.0,359 1008.3,610 1008.6,467 1008.9,411 1009.2,582 1009.5,521 1009.8,359 1010.0,413 1010.3,397 1010.6,628 1010.9,331 1011.2,444 1011.5,388 1011.8,636 1012.1,264 1012.4,630 1012.7,423 1013.0,472 1013.3,534 1013.6,604 1013.8,543 1014.1,305 1014.4,578 1014.7,474 1015.0,274 1015.3,523 1015.6,290 1015.9,598 1016.2,508 1016.5,488 1016.8,622 1017.1,580 1017.3,403 1017.6,481 1017.9,646 1018.2,541 1018.5,537 1018.8,473 1019.1,413 1019.4,463 1019.7,290 1020.0,292 1020.3,350 1020.6,455 1020.8,259 1021.1,525 1021.4,471 1021.7,609 1022.0,466 1022.3,228 1022.6,234 1022.9,518 1023.2,454 1023.5,544 1023.8,448 1024.1,319 1024.3,529 1024.6,229 1024.9,228 1025.2,332 1025.5,587 1025.8,618 1026.1,239 1026.4,239 1026.7,385 1027.0,536 1027.3,540 1027.6,287 1027.9,578 1028.1,435 1028.4,576 1028.7,567 1029.0,275 1029.3,270 1029.6,392 1029.9,490 1030.2,561 1030.5,611 1030.8,595 1031.1,525 1031.4,622 1031.6,523 1031.9,584 1032.2,366 1032.5,346 1032.8,242 1033.1,579 1033.4,298 1033.7,299 1034.0,271 1034.3,367 1034.6,308 1034.9,292 1035.1,625 1035.4,331 1035.7,288 1036.0,252 1036.3,380 1036.6,456 1036.9,489 1037.2,416 1037.5,482 1037.8,473 1038.1,296 1038.4,347 1038.6,461 1038.9,350 1039.2,628 1039.5,329 1039.8,442 1040.1,492 1040.4,229 1040.7,544 1041.0,550 1041.3,234 1041.6,330 1041.9,537 1042.2,340 1042.4,271 1042.7,389 1043.0,534 1043.3,532 1043.6,429 1043.9,468 1044.2,226 1044.5,488 1044.8,344 1045.1,509 1045.4,631 1045.7,618 1045.9,247 1046.2,472 1046.5,353 1046.8,488 1047.1,569 1047.4,497 1047.7,380 1048.0,422 1048.3,457 1048.6,437 1048.9,466 1049.2,286 1049.4,589 1049.7,520 1050.0,623 1050.3,279 1050.6,513 1050.9,326 1051.2,635 1051.5,331 1051.8,600 1052.1,506 1052.4,490 1052.7,417 1053.0,303 1053.2,259 1053.5,336 1053.8,373 1054.1,262 1054.4,487 1054.7,498 1055.0,619 1055.3,433 1055.6,311 1055.9,617 1056.2,425 1056.5,365 1056.7,458 1057.0,539 1057.3,255 1057.6,321 1057.9,627 1058.2,531 1058.5,440 1058.8,476 1059.1,367 1059.4,509 1059.7,543 1060.0,556 1060.2,473 1060.5,286 1060.8,425 1061.1,555 1061.4,449 1061.7,579 1062.0,561 1062.3,414 1062.6,274 1062.9,297 1063.2,253 1063.5,263 1063.7,528 1064.0,634 1064.3,270 1064.6,268 1064.9,606 1065.2,561 1065.5,531 1065.8,311 1066.1,537 1066.4,588 1066.7,244 1067.0,581 1067.3,306 1067.5,249 1067.8,475 1068.1,494 1068.4,605 1068.7,485 1069.0,327 1069.3,546 1069.6,595 1069.9,355 1070.2,317 1070.5,556 1070.8,351 1071.0,469 1071.3,473 1071.6,493 1071.9,550 1072.2,233 1072.5,389 1072.8,374 1073.1,264 1073.4,366 1073.7,621 1074.0,551 1074.3,607 1074.5,631 1074.8,602 1075.1,362 1075.4,377 1075.7,502 1076.0,253 1076.3,627 1076.6,437 1076.9,240 1077.2,264 1077.5,290 1077.8,363 1078.0,360 1078.3,290 1078.6,607 1078.9,455 1079.2,473 1079.5,264 1079.8,242 1080.1,257 1080.4,328 1080.7,557 1081.0,554 1081.3,414 1081.6,636 1081.8,634 1082.1,245 1082.4,527 1082.7,433 1083.0,247 1083.3,570 1083.6,343 1083.9,411 1084.2,350 1084.5,322 1084.8,305 1085.1,345 1085.3,543 1085.6,227 1085.9,577 1086.2,462 1086.5,256 1086.8,280 1087.1,504 1087.4,573 1087.7,578 1088.0,285 1088.3,285 1088.6,251 1088.8,495 1089.1,326 1089.4,446 1089.7,421 1090.0,598 1090.3,370 1090.6,548 1090.9,265 1091.2,532 1091.5,326 1091.8,639 1092.1,317 1092.3,258 1092.6,383 1092.9,269 1093.2,450 1093.5,442 1093.8,249 1094.1,570 1094.4,604 1094.7,311 1095.0,568 1095.3,277 1095.6,377 1095.9,289 1096.1,328 1096.4,412 1096.7,377 1097.0,346 1097.3,361 1097.6,607 1097.9,562 1098.2,480 1098.5,337 1098.8,496 1099.1,503 1099.4,425 1099.6,547 1099.9,641 1100.2,642" fill="none" stroke="#008000" stroke-width="2.8" stroke-linejoin="round" stroke-linecap="square"/></g><rect x="181.25" y="204.9" width="962.75" height="462.9" fill="none" stroke="#2a2a2a" stroke-width="1.15"/><path d="M176.7 225.8H181.2M176.7 281.9H181.2M176.7 338.0H181.2M176.7 394.2H181.2M176.7 450.3H181.2M176.7 506.4H181.2M176.7 562.5H181.2M176.7 618.6H181.2M1144 655.4H1148.6M1144 569.5H1148.6M1144 483.6H1148.6M1144 397.8H1148.6M1144 311.9H1148.6M1144 226.0H1148.6M225.0 667.8V672.3M331.8 667.8V672.3M438.3 667.8V672.3M544.9 667.8V672.3M651.4 667.8V672.3M758.2 667.8V672.3M864.7 667.8V672.3M971.2 667.8V672.3M1077.8 667.8V672.3" stroke="#2a2a2a" stroke-width="1.1" fill="none"/><circle cx="149" cy="200" r="4" fill="#9467bd"/><rect x="429.9" y="186.7" width="6.6" height="11.6" fill="none" stroke="#262626" stroke-width="1"/></svg><span class="t" style="left:156.6px;top:217.6px;height:18px;line-height:18px;font-size:12.6px;color:#1e90ff;font-weight:400;letter-spacing:1.184px;">10</span><span class="t" style="left:164.2px;top:273.7px;height:18px;line-height:18px;font-size:12.6px;color:#1e90ff;font-weight:400;letter-spacing:0.584px;">8</span><span class="t" style="left:164.2px;top:329.8px;height:18px;line-height:18px;font-size:12.6px;color:#1e90ff;font-weight:400;letter-spacing:0.584px;">6</span><span class="t" style="left:164.2px;top:386.0px;height:18px;line-height:18px;font-size:12.6px;color:#1e90ff;font-weight:400;letter-spacing:0.584px;">4</span><span class="t" style="left:164.2px;top:442.1px;height:18px;line-height:18px;font-size:12.6px;color:#1e90ff;font-weight:400;letter-spacing:0.584px;">2</span><span class="t" style="left:164.2px;top:498.2px;height:18px;line-height:18px;font-size:12.6px;color:#1e90ff;font-weight:400;letter-spacing:0.584px;">0</span><span class="t" style="left:164.2px;top:554.3px;height:18px;line-height:18px;font-size:12.6px;color:#1e90ff;font-weight:400;letter-spacing:0.584px;">2</span><div class="a" style="left:154.8px;top:562.7px;width:7.8px;height:1.1px;background:#1e90ff"></div><span class="t" style="left:164.2px;top:610.4px;height:18px;line-height:18px;font-size:12.6px;color:#1e90ff;font-weight:400;letter-spacing:0.584px;">4</span><div class="a" style="left:154.8px;top:618.8px;width:7.8px;height:1.1px;background:#1e90ff"></div><span class="t" style="left:1153.3px;top:647.2px;height:18px;line-height:18px;font-size:12.6px;color:#228b22;font-weight:400;letter-spacing:0.704px;">0</span><span class="t" style="left:1153.3px;top:561.3px;height:18px;line-height:18px;font-size:12.6px;color:#228b22;font-weight:400;letter-spacing:0.950px;">1000</span><span class="t" style="left:1153.3px;top:475.4px;height:18px;line-height:18px;font-size:12.6px;color:#228b22;font-weight:400;letter-spacing:0.950px;">2000</span><span class="t" style="left:1153.3px;top:389.6px;height:18px;line-height:18px;font-size:12.6px;color:#228b22;font-weight:400;letter-spacing:0.950px;">3000</span><span class="t" style="left:1153.3px;top:303.7px;height:18px;line-height:18px;font-size:12.6px;color:#228b22;font-weight:400;letter-spacing:0.950px;">4000</span><span class="t" style="left:1153.3px;top:217.8px;height:18px;line-height:18px;font-size:12.6px;color:#228b22;font-weight:400;letter-spacing:0.950px;">5000</span><span class="t" style="left:209.4px;top:672.6px;height:18px;line-height:18px;font-size:12.6px;color:#262626;font-weight:400;letter-spacing:1.056px;">2000</span><span class="t" style="left:316.2px;top:672.6px;height:18px;line-height:18px;font-size:12.6px;color:#262626;font-weight:400;letter-spacing:1.056px;">2001</span><span class="t" style="left:422.7px;top:672.6px;height:18px;line-height:18px;font-size:12.6px;color:#262626;font-weight:400;letter-spacing:1.056px;">2002</span><span class="t" style="left:529.3px;top:672.6px;height:18px;line-height:18px;font-size:12.6px;color:#262626;font-weight:400;letter-spacing:1.056px;">2003</span><span class="t" style="left:635.8px;top:672.6px;height:18px;line-height:18px;font-size:12.6px;color:#262626;font-weight:400;letter-spacing:1.056px;">2004</span><span class="t" style="left:742.6px;top:672.6px;height:18px;line-height:18px;font-size:12.6px;color:#262626;font-weight:400;letter-spacing:1.056px;">2005</span><span class="t" style="left:849.1px;top:672.6px;height:18px;line-height:18px;font-size:12.6px;color:#262626;font-weight:400;letter-spacing:1.056px;">2006</span><span class="t" style="left:955.6px;top:672.6px;height:18px;line-height:18px;font-size:12.6px;color:#262626;font-weight:400;letter-spacing:1.056px;">2007</span><span class="t" style="left:1062.2px;top:672.6px;height:18px;line-height:18px;font-size:12.6px;color:#262626;font-weight:400;letter-spacing:1.056px;">2008</span><span class="t" style="left:647.4px;top:690.3px;height:18px;line-height:18px;font-size:12.6px;color:#262626;font-weight:400;letter-spacing:0.730px;">Date</span><span class="t" style="left:443.2px;top:181.0px;height:22px;line-height:22px;font-size:15.4px;color:#262626;font-weight:400;letter-spacing:0.681px;">GDP Growth vs Corporate Profits — The Growth Connection</span><span class="t" style="left:78.1px;top:427.5px;width:123.5px;height:18px;line-height:18px;text-align:center;font-size:12.6px;color:#1e90ff;letter-spacing:0.712px;transform:rotate(-90deg);transform-origin:50% 50%;text-indent:0.712px">GDP Growth (%)</span><span class="t" style="left:1089.3px;top:427.2px;width:210.5px;height:18px;line-height:18px;text-align:center;font-size:12.6px;color:#228b22;letter-spacing:0.657px;transform:rotate(-90deg);transform-origin:50% 50%;text-indent:0.657px">Corporate Profits (Billion USD)</span>
<!-- status -->
<div class="a" style="left:0;top:728px;width:1280px;height:24px;background:#424242"></div><span class="t" style="left:28.0px;top:730.5px;height:19px;line-height:19px;font-size:13.4px;color:#e6e6e6;font-weight:400;letter-spacing:-0.388px;">Simple</span><div class="a" style="left:72px;top:732px;width:35px;height:16px;border-radius:8px;background:#bdbdbd"></div><div class="a" style="left:75px;top:735px;width:10px;height:10px;border-radius:5px;background:#2a2a2a"></div><span class="t" style="left:133.0px;top:730.5px;height:19px;line-height:19px;font-size:13.4px;color:#e6e6e6;font-weight:400;letter-spacing:-0.953px;">0</span><div class="a" style="left:150px;top:733px;width:16px;height:15px;background:#f2f2f2"></div><span class="t" style="left:152.5px;top:734.0px;height:13px;line-height:13px;font-size:9.5px;color:#222;font-weight:700;letter-spacing:0.922px;">$_</span><span class="t" style="left:176.0px;top:730.5px;height:19px;line-height:19px;font-size:13.4px;color:#e6e6e6;font-weight:400;letter-spacing:-0.953px;">3</span><svg class="a" style="left:193px;top:732px" width="16" height="16" viewBox="0 0 16 16"><g fill="none" stroke="#e4e4e4"><rect x="3.6" y="3.6" width="8.8" height="8.800" rx="1" stroke-width="1.500"/><rect x="6.3" y="6.3" width="3.4" height="3.400" stroke-width="1.100"/><path d="M5.800 1v2.400M8 1v2.400M10.200 1v2.400M5.800 12.600V15M8 12.600V15M10.200 12.600V15M1 5.800h2.400M1 8h2.400M1 10.200h2.400M12.600 5.800H15M12.600 8H15M12.600 10.200H15" stroke-width="1.100"/></g></svg><span class="t" style="left:227.0px;top:730.5px;height:19px;line-height:19px;font-size:13.4px;color:#e6e6e6;font-weight:400;letter-spacing:-0.269px;">Python [conda env:base] * | Idle</span><span class="t" style="left:812.5px;top:730.5px;height:19px;line-height:19px;font-size:13.4px;color:#e6e6e6;font-weight:400;letter-spacing:-0.268px;">Mode: Command</span><svg class="a" style="left:930.500px;top:732px" width="16" height="16" viewBox="0 0 16 16"><path d="M8 1.300l5.600 2v4.200c0 3.300-2.300 5.900-5.600 7.200-3.300-1.300-5.600-3.900-5.600-7.200V3.300z" fill="none" stroke="#e4e4e4" stroke-width="1.300" stroke-linejoin="round"/><path d="M5.200 8l2 2 3.600-3.800" fill="none" stroke="#e4e4e4" stroke-width="1.400"/></svg><span class="t" style="left:964.0px;top:730.5px;height:19px;line-height:19px;font-size:13.4px;color:#e6e6e6;font-weight:400;letter-spacing:-0.473px;">Ln 12, Col 27</span><span class="t" style="left:1054.0px;top:730.5px;height:19px;line-height:19px;font-size:13.4px;color:#e6e6e6;font-weight:400;letter-spacing:-0.364px;">Finance &amp; Economics.ipynb</span><span class="t" style="left:1227.0px;top:730.5px;height:19px;line-height:19px;font-size:13.4px;color:#e6e6e6;font-weight:400;letter-spacing:-0.953px;">2</span><svg class="a" style="left:1242.800px;top:730.500px" width="18" height="19" viewBox="0 0 18 19"><path d="M9 2.200c-3 0-4.800 2.200-4.800 5.200v3.800L2.400 13.800v.8h13.200v-.8l-1.800-2.600V7.400c0-3-1.800-5.200-4.800-5.200z" fill="none" stroke="#e6e6e6" stroke-width="1.500" stroke-linejoin="round"/><path d="M7 16.200a2 2 0 0 0 4 0z" fill="#e6e6e6"/><circle cx="9" cy="1.800" r="1" fill="#e6e6e6"/></svg>
<!-- taskbar -->
<div class="a" style="left:0;top:752px;width:1280px;height:48px;background:linear-gradient(90deg,#474b53 0%,#44484f 9%,#3e434c 13.5%,#353a48 17%,#2d3346 20.5%,#272d43 25%,#22283f 30%,#1f2541 36%,#1e2442 50%,#1f2540 60%,#272b3e 65.6%,#2d313c 70.3%,#33363f 74.2%,#383b42 78%,#3b3e44 81.25%,#3b3e44 100%)"></div><div class="a" style="left:0;top:752px;width:1280px;height:48px;background:linear-gradient(180deg,rgba(255,255,255,.025),rgba(0,0,0,.06))"></div><svg class="a" style="left:175.500px;top:764.500px" width="23" height="23" viewBox="0 0 23 23"><defs><linearGradient id="wg" x1="0" y1="0" x2="0" y2="1"><stop offset="0" stop-color="#7fd8fb"/><stop offset="1" stop-color="#189cf0"/></linearGradient></defs><g fill="url(#wg)"><rect x="0" y="0" width="11" height="11" rx="0.800"/><rect x="12" y="0" width="11" height="11" rx="0.800"/><rect x="0" y="12" width="11" height="11" rx="0.800"/><rect x="12" y="12" width="11" height="11" rx="0.800"/></g></svg><svg class="a" style="left:220px;top:764px" width="24" height="24" viewBox="0 0 24 24"><circle cx="13.600" cy="9.600" r="7.200" fill="#3d4350" stroke="#e9e9e9" stroke-width="2.300"/><path d="M8.400 15L2.200 21.600" stroke="#e9e9e9" stroke-width="2.800" stroke-linecap="round"/></svg><svg class="a" style="left:263.500px;top:764.500px" width="25" height="23" viewBox="0 0 25 23"><rect x="7" y="0" width="17.500" height="15" rx="1" fill="#f4f4f4"/><rect x="0.500" y="6.600" width="17" height="14.600" rx="1" fill="#6e7074"/><rect x="7" y="6.600" width="10.500" height="8.400" fill="#bfc0c2"/></svg><svg class="a" style="left:307.500px;top:765px" width="24" height="22" viewBox="0 0 24 22"><rect x="0" y="0" width="24" height="22" rx="1.500" fill="#5b5f66"/><rect x="2" y="2" width="9" height="18" rx="0.600" fill="#f0f0f0"/><rect x="13" y="2" width="9" height="8" fill="#35d4f4"/><rect x="13" y="12" width="9" height="3" fill="#1aa5ea"/><rect x="13" y="17" width="9" height="3" fill="#1aa5ea"/></svg><svg class="a" style="left:352px;top:765px" width="23" height="22" viewBox="0 0 23 22"><rect x="0" y="0" width="23" height="22" rx="1.500" fill="#f6d211"/><circle cx="11.500" cy="7.800" r="4.600" fill="#fff"/><path d="M10 5.400l4 2.400-4 2.400z" fill="#e8b800"/></svg><span class="t" style="left:355.5px;top:776.6px;height:8px;line-height:8px;font-size:6px;color:#1c1c1c;font-weight:700;letter-spacing:-0.403px;">Player</span><svg class="a" style="left:394.500px;top:762.500px" width="26" height="27" viewBox="0 0 26 27"><defs><radialGradient id="ff" cx="0.600" cy="0.200" r="0.900"><stop offset="0" stop-color="#ffe44a"/><stop offset="0.450" stop-color="#ff9a1f"/><stop offset="1" stop-color="#f2353d"/></radialGradient></defs><path d="M13 4.600c2-2.400 3.400-3.600 4-4 .2 2.200 1.400 3.600 3 5.200 2.200 2.200 4.600 5 4.600 9.600 0 6-5 10.600-11.600 10.600S1.400 21.400 1.400 15.400c0-3.400 1.200-6 2.600-7.800.2 1.200.6 2 1.200 2.600C5.400 7.600 7 5.600 9.600 4.200c-.2 1 .2 2.200 1 3 .6-1 1.400-1.800 2.400-2.600z" fill="url(#ff)"/><circle cx="12.400" cy="15.200" r="5.200" fill="#7a3fc8"/><path d="M7.400 13.600c1.600-2.400 5-3 7.600-1.600 2 1.200 2.800 3.400 2.200 5.600 2-1.600 2.400-5 .4-7.200-2.600-2.800-7.600-2.600-10.200 1z" fill="#ff8a1c"/></svg><svg class="a" style="left:439px;top:764px" width="25" height="25" viewBox="0 0 25 25"><defs><linearGradient id="eg" x1="0" y1="0" x2="1" y2="1"><stop offset="0" stop-color="#35c1f1"/><stop offset="1" stop-color="#1669c9"/></linearGradient><linearGradient id="eg2" x1="0" y1="0" x2="1" y2="0"><stop offset="0" stop-color="#2fc3e0"/><stop offset="1" stop-color="#5fd65a"/></linearGradient></defs><circle cx="12.500" cy="12.500" r="12" fill="url(#eg)"/><path d="M1 10.500C2 4.500 7 0.500 12.500 0.500c6 0 11.500 4.500 11.500 10.500 0 3.500-2.500 5.500-5.500 5.500-2.500 0-4-1-4-2 0-.8.800-1.200.800-2.800 0-2.400-2.400-4.400-5.400-4.400-4 0-7 2.200-8.900 3.200z" fill="url(#eg2)"/><path d="M9.500 24c-3.500-2-5-6-3.500-9.500 1-2.500 3.500-4 6-4-2 1.500-2.500 4-1.500 6.500 1.200 3 4.500 5 8.500 4-2.500 2.800-6 4-9.500 3z" fill="#0f4fa0"/></svg><div class="a" style="left:448.0px;top:792px;width:6px;height:2.400px;border-radius:1.200px;background:#9a9da3"></div><div class="a" style="left:475px;top:756px;width:40px;height:40px;border-radius:4px;background:rgba(255,255,255,.075);box-shadow:0 0 0 0.600px rgba(255,255,255,.06)"></div><svg class="a" style="left:483px;top:764px" width="24" height="24" viewBox="0 0 24 24"><circle cx="12" cy="12" r="12" fill="#fff"/><path d="M12 12L1.608 6A12 12 0 0 1 22.392 6z" fill="#e94335"/><path d="M12 12L22.392 6A12 12 0 0 1 12 24z" fill="#fbbc05"/><path d="M12 12L12 24A12 12 0 0 1 1.608 6z" fill="#34a853"/><path d="M1.608 6A12 12 0 0 1 22.392 6H12z" fill="#e94335"/><circle cx="12" cy="12" r="5.600" fill="#fff"/><circle cx="12" cy="12" r="4.400" fill="#4285f4"/></svg><div class="a" style="left:487.0px;top:792px;width:16px;height:2.400px;border-radius:1.200px;background:#b6b8bd"></div><svg class="a" style="left:528.5px;top:764px" width="23" height="21" viewBox="0 0 23 21"><rect x="9" y="3" width="13.300" height="15" rx="0.600" fill="#fff" stroke="#2b5eb5" stroke-width="0.900"/><g stroke="#2b5eb5" stroke-width="1.250"><path d="M13.500 5.600h8M13.500 8.100h8M13.500 10.600h8M13.500 13.100h8M13.500 15.600h8"/></g><path d="M0 2.300L12.700 0.200v20.600L0 18.700z" fill="#2b5eb5"/><text x="6.400" y="14.500" text-anchor="middle" font-family="Liberation Sans" font-weight="700" font-size="10.500" fill="#fff">W</text></svg><div class="a" style="left:536.0px;top:792px;width:6px;height:2.400px;border-radius:1.200px;background:#9a9da3"></div><svg class="a" style="left:572.5px;top:764px" width="23" height="21" viewBox="0 0 23 21"><rect x="9" y="3" width="13.300" height="15" rx="0.600" fill="#fff" stroke="#1f8a4c" stroke-width="0.900"/><g stroke="#1f8a4c" stroke-width="1.250"><path d="M13.500 5.600h8M13.500 8.100h8M13.500 10.600h8M13.500 13.100h8M13.500 15.600h8"/></g><path d="M17.600 4v13.500" stroke="#fff" stroke-width="0.900"/><path d="M0 2.300L12.700 0.200v20.600L0 18.700z" fill="#1f8a4c"/><text x="6.400" y="14.500" text-anchor="middle" font-family="Liberation Sans" font-weight="700" font-size="10.500" fill="#fff">X</text></svg><svg class="a" style="left:616.5px;top:764px" width="23" height="21" viewBox="0 0 23 21"><rect x="9" y="3" width="13.300" height="15" rx="0.600" fill="#fff" stroke="#d6522f" stroke-width="0.900"/><circle cx="17.300" cy="8.300" r="2.700" fill="none" stroke="#d6522f" stroke-width="1.200"/><path d="M17.300 8.300V5.600M17.300 8.300h2.700" stroke="#d6522f" stroke-width="1"/><g stroke="#d6522f" stroke-width="1.300"><path d="M14 13.300h7.200M14 15.800h7.200"/></g><path d="M0 2.300L12.700 0.200v20.600L0 18.700z" fill="#d6522f"/><text x="6.400" y="14.500" text-anchor="middle" font-family="Liberation Sans" font-weight="700" font-size="10.500" fill="#fff">P</text></svg><svg class="a" style="left:659.800px;top:763.600px" width="24" height="24" viewBox="0 0 24 24"><circle cx="12" cy="12" r="10.700" fill="#222126" stroke="#cfcfcf" stroke-width="1.100"/><g fill="none" stroke="#b9b9b9" stroke-width="1.300"><path d="M12 12C10 8.200 11.800 4.800 15 4M12 12c4.300-.4 6.600 2.400 5.400 5.600M12 12c-2 3.600-5.800 3.600-7.600 1"/></g></svg><svg class="a" style="left:704px;top:763.750px" width="24" height="24" viewBox="0 0 24 24"><defs><linearGradient id="cv" x1="0.250" y1="0" x2="0.700" y2="1"><stop offset="0" stop-color="#16cfd4"/><stop offset="0.500" stop-color="#3f6fea"/><stop offset="1" stop-color="#9526e0"/></linearGradient></defs><circle cx="12" cy="12" r="12" fill="url(#cv)"/></svg><span class="t" style="left:710.2px;top:761.8px;height:27px;line-height:27px;font-size:19px;color:#fff;font-weight:400;letter-spacing:0.000px;font-family:'Liberation Serif',serif;font-style:italic;">C</span><svg class="a" style="left:749px;top:764.600px" width="22" height="22" viewBox="0 0 22 22"><circle cx="10.800" cy="10.800" r="10.800" fill="#1663a8"/><g stroke="#fff" stroke-width="1.700" stroke-linecap="butt"><path d="M3.200 9.800v2M5.700 8v5.600M8.200 5v11.600M10.800 2.800v16M13.400 5v11.600M15.900 8v5.600M18.400 9.800v2"/></g><rect x="9.300" y="9.300" width="3" height="3" fill="#1663a8"/><rect x="10" y="10" width="1.600" height="1.600" fill="#fff"/></svg><svg class="a" style="left:795px;top:768px" width="16" height="16" viewBox="0 0 16 16"><rect width="16" height="16" rx="3.500" fill="#050505"/><path d="M3.500 4.500h9l-1 3h-2v4l-1.500 1.500L6.500 11.500v-4h-2z" fill="none" stroke="#e6e6e6" stroke-width="1.100" stroke-linejoin="round"/></svg><div class="a" style="left:800.0px;top:792px;width:6px;height:2.400px;border-radius:1.200px;background:#9a9da3"></div><svg class="a" style="left:836.500px;top:765.500px" width="22" height="22" viewBox="0 0 22 22"><path d="M2 2h13v4H6v8H2z" fill="#4285f4"/><path d="M15 2l5 4h-5z" fill="#ea4335"/><path d="M15 2h0v4h5v0z" fill="#ea4335"/><path d="M15 6h5v8h-5z" fill="#fbbc04"/><path d="M2 12h4v2h14v3.500H9L6 21v-3.500H2z" fill="#34a853"/><path d="M2 2h13l0 4H2z" fill="#4285f4"/><path d="M12 2h3l5 4h-8z" fill="#fbbc04" opacity="0"/></svg><svg class="a" style="left:879px;top:764.500px" width="25" height="24" viewBox="0 0 25 24"><path d="M7 6.500L16 1l9 5.500V19a2 2 0 0 1-2 2H9z" fill="#1c8ee6"/><path d="M9 9l8-4 8 4v10l-8 2.500L9 19z" fill="#45c6f5"/><path d="M9 21l16-10v8a2 2 0 0 1-2 2z" fill="#1479d4"/><rect x="0" y="5.500" width="13" height="13" rx="1.800" fill="#0f6cbd"/><circle cx="6.500" cy="12" r="3.300" fill="none" stroke="#fff" stroke-width="1.700"/></svg><svg class="a" style="left:923px;top:764px" width="24" height="24" viewBox="0 0 24 24"><path d="M11.39 3.22A8.8 8.8 0 1 1 4.97 17.30" fill="none" stroke="#3fae2a" stroke-width="3.6"/><circle cx="5.12" cy="15.66" r="0.9" fill="#3fae2a"/><circle cx="2.84" cy="15.70" r="0.9" fill="#3fae2a"/><circle cx="4.41" cy="13.75" r="0.9" fill="#3fae2a"/><circle cx="2.19" cy="13.20" r="0.9" fill="#3fae2a"/><circle cx="4.21" cy="11.73" r="0.9" fill="#3fae2a"/><circle cx="2.22" cy="10.62" r="0.9" fill="#3fae2a"/><circle cx="4.55" cy="9.72" r="0.9" fill="#3fae2a"/><circle cx="2.91" cy="8.14" r="0.9" fill="#3fae2a"/><circle cx="5.39" cy="7.87" r="0.9" fill="#3fae2a"/><circle cx="4.21" cy="5.92" r="0.9" fill="#3fae2a"/><circle cx="6.69" cy="6.30" r="0.9" fill="#3fae2a"/><circle cx="6.05" cy="4.11" r="0.9" fill="#3fae2a"/><circle cx="8.34" cy="5.12" r="0.9" fill="#3fae2a"/><circle cx="8.30" cy="2.84" r="0.9" fill="#3fae2a"/><circle cx="10.25" cy="4.41" r="0.9" fill="#3fae2a"/><circle cx="10.80" cy="2.19" r="0.9" fill="#3fae2a"/></svg><div class="a" style="left:932.0px;top:792px;width:6px;height:2.400px;border-radius:1.200px;background:#9a9da3"></div><svg class="a" style="left:968.500px;top:763.500px" width="22" height="25" viewBox="0 0 22 25"><path d="M0.500 1.500L11 6.500l10.500-5v17L11 24 0.500 18.500z" fill="#c8242b"/><path d="M5 8.500l6 3 6-3v7.500l-6 3-6-3z" fill="#363940"/><path d="M0.500 1.500L11 6.500v5l-6-3v7.500l-4.500-2.500z" fill="#d8333a"/></svg><div class="a" style="left:976.0px;top:792px;width:6px;height:2.400px;border-radius:1.200px;background:#9a9da3"></div><svg class="a" style="left:1011px;top:763px" width="25" height="26" viewBox="0 0 25 26"><path d="M12 1.500C5.500 1.500 1 6 1 11.500c0 5 3.500 8.500 7.500 8.500 2 0 2.500-1.200 2.500-2.200 0-1.500 1-2.300 2.500-2.300h3c4 0 6.500-2 6.500-5.500 0-5-5-8.500-11-8.500z" fill="#3aa8ea"/><circle cx="6" cy="11" r="2" fill="#35b34a"/><circle cx="8.500" cy="6.500" r="2" fill="#f2c11c"/><circle cx="13.500" cy="5" r="2" fill="#ef7d22"/><circle cx="18.500" cy="7" r="2" fill="#e23b3b"/><rect x="17.500" y="9" width="3.600" height="7" rx="0.800" fill="#d9a066"/><path d="M17.800 16h3l-.4 9.500h-2.200z" fill="#a5622a"/><path d="M10.500 14.500l1 1.600 1.600 1-1.600 1-1 1.600-1-1.600-1.600-1 1.600-1z" fill="#d6ecfa"/></svg><div class="a" style="left:1020.0px;top:792px;width:6px;height:2.400px;border-radius:1.200px;background:#9a9da3"></div><svg class="a" style="left:1050px;top:770.5px" width="16" height="11" viewBox="0 0 16 11"><path d="M2.200 8.600L8 2.800l5.800 5.800" fill="none" stroke="#f0f0f0" stroke-width="1.500"/></svg><svg class="a" style="left:1073.5px;top:769px" width="17" height="16" viewBox="0 0 17 16"><g fill="none" stroke="#f6f6f6" stroke-width="1.100"><rect x="5" y="1.5" width="11.3" height="8.3"/><path d="M10.6 9.800v3.400M6.800 13.700h7.600"/><rect x="0.700" y="1.200" width="4.600" height="3.800" fill="#3a3d44"/><path d="M3 5v7.300h4"/></g></svg><svg class="a" style="left:1097.5px;top:768.5px" width="18" height="16" viewBox="0 0 18 16"><g fill="none" stroke="#f6f6f6" stroke-width="1.100"><path d="M0.800 5.800h2.700l3.700-3.600v11.600l-3.700-3.600H0.800z" stroke-linejoin="round"/><path d="M9.400 5.800a3.200 3.200 0 0 1 0 4.400M11.500 3.900a6 6 0 0 1 0 8.200M13.700 2a8.700 8.700 0 0 1 0 12"/></g></svg><span class="t" style="left:1124.5px;top:759.7px;height:17px;line-height:17px;font-size:12px;color:#f2f2f2;font-weight:400;letter-spacing:-1.758px;">ENG</span><span class="t" style="left:1124.5px;top:776.5px;height:17px;line-height:17px;font-size:12px;color:#f2f2f2;font-weight:400;letter-spacing:-1.005px;">INTL</span><span class="t" style="left:1176.5px;top:751.9px;height:17px;line-height:17px;font-size:12px;color:#f2f2f2;font-weight:400;letter-spacing:-0.508px;">19:29</span><span class="t" style="left:1171.5px;top:767.9px;height:17px;line-height:17px;font-size:12px;color:#f2f2f2;font-weight:400;letter-spacing:-0.541px;">Sunday</span><span class="t" style="left:1161.0px;top:783.8px;height:17px;line-height:17px;font-size:12px;color:#f2f2f2;font-weight:400;letter-spacing:-0.229px;">26/10/2025</span><svg class="a" style="left:1238px;top:767px" width="28" height="26" viewBox="0 0 28 26"><path d="M1.500 1.500h15.500v11.500H6l-2.500 3v-3h-2z" fill="#f4f4f4"/><g stroke="#3a3d44" stroke-width="1"><path d="M4 4.800h10.500M4 7.300h10.500M4 9.800h10.500"/></g><circle cx="17" cy="16.500" r="8.200" fill="#34363c" stroke="#8b8d92" stroke-width="1"/></svg><span class="t" style="left:1248.3px;top:775.1px;height:17px;line-height:17px;font-size:12px;color:#fff;font-weight:400;letter-spacing:0.041px;">21</span><div class="a" style="left:1275px;top:752px;width:1px;height:48px;background:#6d6f74"></div>
</body></html>
